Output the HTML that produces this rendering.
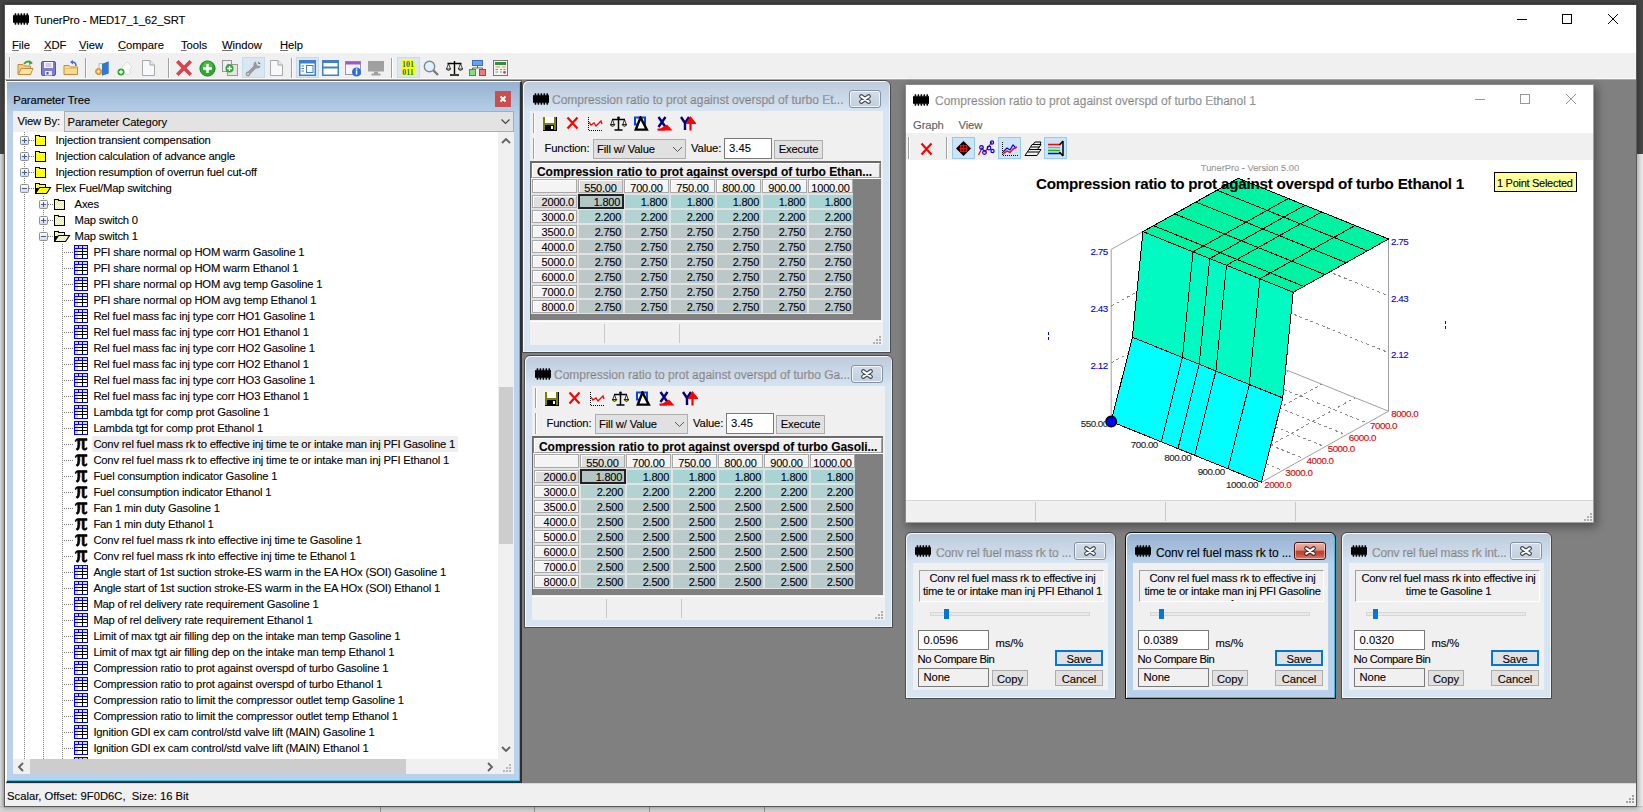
<!DOCTYPE html><html><head><meta charset="utf-8"><style>
html,body{margin:0;padding:0;}body{-webkit-text-stroke:0.2px rgba(0,0,0,0.55);width:1643px;height:812px;position:relative;overflow:hidden;background:#e9e9e9;font-family:"Liberation Sans", sans-serif;color:#000;}
div{box-sizing:border-box;}
</style></head><body>
<div style="position:absolute;left:0px;top:0px;width:1643px;height:154px;background:#474747;"></div>
<div style="position:absolute;left:0px;top:154px;width:4px;height:658px;background:linear-gradient(90deg,#e6e6e6,#cfcfcf);"></div>
<div style="position:absolute;left:0px;top:806px;width:1643px;height:6px;background:linear-gradient(#bdbdbd,#dedede 2px,#d4d4d4);"></div>
<div style="position:absolute;left:380px;top:807px;width:1px;height:5px;background:#9a9a9a;"></div>
<div style="position:absolute;left:534px;top:807px;width:1px;height:5px;background:#9a9a9a;"></div>
<div style="position:absolute;left:649px;top:807px;width:1px;height:5px;background:#9a9a9a;"></div>
<div style="position:absolute;left:764px;top:807px;width:1px;height:5px;background:#9a9a9a;"></div>
<div style="position:absolute;left:4px;top:4px;width:1633px;height:803px;background:#fff;border:1px solid #5a5a5a;border-top:1px solid #444;box-shadow:0 0 5px 1px rgba(0,0,0,0.35);"></div>
<svg style="position:absolute;left:13px;top:13px" width="16" height="12"><rect x="0" y="2.2" width="16" height="7.6" fill="#000"/><rect x="1.60" y="0.3" width="1.7" height="2.4" rx="0.6" fill="#000"/><rect x="1.60" y="9.3" width="1.7" height="2.4" rx="0.6" fill="#000"/><rect x="4.55" y="0.3" width="1.7" height="2.4" rx="0.6" fill="#000"/><rect x="4.55" y="9.3" width="1.7" height="2.4" rx="0.6" fill="#000"/><rect x="7.50" y="0.3" width="1.7" height="2.4" rx="0.6" fill="#000"/><rect x="7.50" y="9.3" width="1.7" height="2.4" rx="0.6" fill="#000"/><rect x="10.45" y="0.3" width="1.7" height="2.4" rx="0.6" fill="#000"/><rect x="10.45" y="9.3" width="1.7" height="2.4" rx="0.6" fill="#000"/><rect x="13.40" y="0.3" width="1.7" height="2.4" rx="0.6" fill="#000"/><rect x="13.40" y="9.3" width="1.7" height="2.4" rx="0.6" fill="#000"/></svg>
<div style="position:absolute;left:34px;top:14.98px;font-size:11.25px;line-height:11.25px;white-space:nowrap;letter-spacing:-0.1px;">TunerPro - MED17_1_62_SRT</div>
<svg style="position:absolute;left:1500px;top:8px" width="130" height="22"><g stroke="#000" stroke-width="1" fill="none" shape-rendering="crispEdges"><line x1="17" y1="11.5" x2="27" y2="11.5"/><rect x="62.5" y="6.5" width="9" height="9"/><line x1="108" y1="6" x2="118" y2="16" shape-rendering="auto"/><line x1="118" y1="6" x2="108" y2="16" shape-rendering="auto"/></g></svg>
<div style="position:absolute;left:12px;top:39.98px;font-size:11.25px;line-height:11.25px;white-space:nowrap;letter-spacing:-0.05px;text-decoration-thickness:1px;text-underline-offset:1px;"><u>F</u>ile</div>
<div style="position:absolute;left:44px;top:39.98px;font-size:11.25px;line-height:11.25px;white-space:nowrap;letter-spacing:-0.05px;text-decoration-thickness:1px;text-underline-offset:1px;"><u>X</u>DF</div>
<div style="position:absolute;left:79px;top:39.98px;font-size:11.25px;line-height:11.25px;white-space:nowrap;letter-spacing:-0.05px;text-decoration-thickness:1px;text-underline-offset:1px;"><u>V</u>iew</div>
<div style="position:absolute;left:118px;top:39.98px;font-size:11.25px;line-height:11.25px;white-space:nowrap;letter-spacing:-0.05px;text-decoration-thickness:1px;text-underline-offset:1px;"><u>C</u>ompare</div>
<div style="position:absolute;left:181px;top:39.98px;font-size:11.25px;line-height:11.25px;white-space:nowrap;letter-spacing:-0.05px;text-decoration-thickness:1px;text-underline-offset:1px;"><u>T</u>ools</div>
<div style="position:absolute;left:222px;top:39.98px;font-size:11.25px;line-height:11.25px;white-space:nowrap;letter-spacing:-0.05px;text-decoration-thickness:1px;text-underline-offset:1px;"><u>W</u>indow</div>
<div style="position:absolute;left:280px;top:39.98px;font-size:11.25px;line-height:11.25px;white-space:nowrap;letter-spacing:-0.05px;text-decoration-thickness:1px;text-underline-offset:1px;"><u>H</u>elp</div>
<div style="position:absolute;left:5px;top:53px;width:1631px;height:27px;background:#f0f0f0;"></div>
<div style="position:absolute;left:5px;top:78px;width:1631px;height:1px;background:#fafafa;"></div>
<div style="position:absolute;left:5px;top:79px;width:1631px;height:1px;background:#a8a8a8;"></div>
<div style="position:absolute;left:6px;top:80px;width:1630px;height:703px;background:#808080;"></div>
<div style="position:absolute;left:6px;top:783px;width:1630px;height:23px;background:#f0f0f0;border-top:1px solid #d7d7d7;"></div>
<div style="position:absolute;left:7px;top:791.48px;font-size:11.25px;line-height:11.25px;white-space:nowrap;">Scalar, Offset: 9F0D6C,&nbsp; Size: 16 Bit</div>
<svg style="position:absolute;left:1626px;top:795px" width="10" height="10"><rect x="6" y="0" width="2" height="2" fill="#a0a0a0"/><rect x="3" y="3" width="2" height="2" fill="#a0a0a0"/><rect x="6" y="3" width="2" height="2" fill="#a0a0a0"/><rect x="0" y="6" width="2" height="2" fill="#a0a0a0"/><rect x="3" y="6" width="2" height="2" fill="#a0a0a0"/><rect x="6" y="6" width="2" height="2" fill="#a0a0a0"/></svg>
<div style="position:absolute;left:6px;top:80px;width:516px;height:1px;background:#5f5f5f;"></div>
<div style="position:absolute;left:6px;top:81px;width:516px;height:702px;background:linear-gradient(#97b1ce 0px,#a9c3df 18px,#b9d1ea 34px,#b9d1ea 100%);border-left:1px solid #fff;border-top:1px solid #fff;border-right:2px solid #2f2f2f;border-bottom:2px solid #2f2f2f;box-shadow:inset -1px -1px 0 #3ac3ec;"></div>
<div style="position:absolute;left:13.3px;top:95.08px;font-size:11.25px;line-height:11.25px;white-space:nowrap;letter-spacing:-0.1px;">Parameter Tree</div>
<div style="position:absolute;left:495px;top:91px;width:16px;height:16px;background:#c94f4f;"><svg width="16" height="16" style="position:absolute;left:0;top:0"><path d="M5.5 5.5 L10.5 10.5 M10.5 5.5 L5.5 10.5" stroke="#fff" stroke-width="2"/></svg></div>
<div style="position:absolute;left:13px;top:111px;width:51px;height:21px;background:#f0f0f0;"></div>
<div style="position:absolute;left:17.5px;top:116.48px;font-size:11.25px;line-height:11.25px;white-space:nowrap;letter-spacing:-0.15px;">View By:</div>
<div style="position:absolute;left:64px;top:111px;width:450px;height:21px;background:#e3e3e3;border:1px solid #acacac;"></div>
<div style="position:absolute;left:67.5px;top:116.98px;font-size:11.25px;line-height:11.25px;white-space:nowrap;letter-spacing:-0.1px;">Parameter Category</div>
<svg style="position:absolute;left:500px;top:118px" width="12" height="8"><path d="M1.5 1.5 L5.5 5.5 L9.5 1.5" stroke="#444" stroke-width="1.2" fill="none"/></svg>
<div style="position:absolute;left:13px;top:132px;width:485px;height:627px;background:#fff;overflow:hidden;"><div style="position:absolute;left:11px;top:0px;width:1px;height:627px;background:repeating-linear-gradient(#7d7d7d 0 1px,transparent 1px 2px);"></div><div style="position:absolute;left:30px;top:64px;width:1px;height:636px;background:repeating-linear-gradient(#7d7d7d 0 1px,transparent 1px 2px);"></div><div style="position:absolute;left:49px;top:112px;width:1px;height:588px;background:repeating-linear-gradient(#7d7d7d 0 1px,transparent 1px 2px);"></div><div style="position:absolute;left:16px;top:8px;width:5px;height:1px;background:repeating-linear-gradient(90deg,#7d7d7d 0 1px,transparent 1px 2px);"></div><svg style="position:absolute;left:7px;top:4px" width="9" height="9"><defs><linearGradient id="pg" x1="0" y1="0" x2="0" y2="1"><stop offset="0" stop-color="#fff"/><stop offset="1" stop-color="#d8d8d8"/></linearGradient></defs><rect x="0.5" y="0.5" width="8" height="8" rx="1" fill="url(#pg)" stroke="#8e8e8e"/><path d="M2 4.5 H7 M4.5 2 V7" stroke="#3c5da6" stroke-width="1"/></svg><svg style="position:absolute;left:22px;top:2px" width="12" height="12" shape-rendering="crispEdges"><defs><pattern id="chk" width="2" height="2" patternUnits="userSpaceOnUse"><rect width="2" height="2" fill="#ffff00"/><rect width="1" height="1" fill="#ffffd8"/><rect x="1" y="1" width="1" height="1" fill="#ffffd8"/></pattern></defs><rect x="0" y="1" width="5" height="3" fill="#000"/><rect x="0" y="2" width="11" height="10" fill="#000"/><rect x="1" y="2" width="3" height="1" fill="#ffff40"/><rect x="1" y="3" width="9" height="8" fill="url(#chk)"/></svg><div style="position:absolute;left:42.6px;top:3.48px;font-size:11.25px;line-height:11.25px;white-space:nowrap;letter-spacing:-0.2px;">Injection transient compensation</div><div style="position:absolute;left:16px;top:24px;width:5px;height:1px;background:repeating-linear-gradient(90deg,#7d7d7d 0 1px,transparent 1px 2px);"></div><svg style="position:absolute;left:7px;top:20px" width="9" height="9"><defs><linearGradient id="pg" x1="0" y1="0" x2="0" y2="1"><stop offset="0" stop-color="#fff"/><stop offset="1" stop-color="#d8d8d8"/></linearGradient></defs><rect x="0.5" y="0.5" width="8" height="8" rx="1" fill="url(#pg)" stroke="#8e8e8e"/><path d="M2 4.5 H7 M4.5 2 V7" stroke="#3c5da6" stroke-width="1"/></svg><svg style="position:absolute;left:22px;top:18px" width="12" height="12" shape-rendering="crispEdges"><defs><pattern id="chk" width="2" height="2" patternUnits="userSpaceOnUse"><rect width="2" height="2" fill="#ffff00"/><rect width="1" height="1" fill="#ffffd8"/><rect x="1" y="1" width="1" height="1" fill="#ffffd8"/></pattern></defs><rect x="0" y="1" width="5" height="3" fill="#000"/><rect x="0" y="2" width="11" height="10" fill="#000"/><rect x="1" y="2" width="3" height="1" fill="#ffff40"/><rect x="1" y="3" width="9" height="8" fill="url(#chk)"/></svg><div style="position:absolute;left:42.6px;top:19.48px;font-size:11.25px;line-height:11.25px;white-space:nowrap;letter-spacing:-0.2px;">Injection calculation of advance angle</div><div style="position:absolute;left:16px;top:40px;width:5px;height:1px;background:repeating-linear-gradient(90deg,#7d7d7d 0 1px,transparent 1px 2px);"></div><svg style="position:absolute;left:7px;top:36px" width="9" height="9"><defs><linearGradient id="pg" x1="0" y1="0" x2="0" y2="1"><stop offset="0" stop-color="#fff"/><stop offset="1" stop-color="#d8d8d8"/></linearGradient></defs><rect x="0.5" y="0.5" width="8" height="8" rx="1" fill="url(#pg)" stroke="#8e8e8e"/><path d="M2 4.5 H7 M4.5 2 V7" stroke="#3c5da6" stroke-width="1"/></svg><svg style="position:absolute;left:22px;top:34px" width="12" height="12" shape-rendering="crispEdges"><defs><pattern id="chk" width="2" height="2" patternUnits="userSpaceOnUse"><rect width="2" height="2" fill="#ffff00"/><rect width="1" height="1" fill="#ffffd8"/><rect x="1" y="1" width="1" height="1" fill="#ffffd8"/></pattern></defs><rect x="0" y="1" width="5" height="3" fill="#000"/><rect x="0" y="2" width="11" height="10" fill="#000"/><rect x="1" y="2" width="3" height="1" fill="#ffff40"/><rect x="1" y="3" width="9" height="8" fill="url(#chk)"/></svg><div style="position:absolute;left:42.6px;top:35.48px;font-size:11.25px;line-height:11.25px;white-space:nowrap;letter-spacing:-0.2px;">Injection resumption of overrun fuel cut-off</div><div style="position:absolute;left:16px;top:56px;width:5px;height:1px;background:repeating-linear-gradient(90deg,#7d7d7d 0 1px,transparent 1px 2px);"></div><svg style="position:absolute;left:7px;top:52px" width="9" height="9"><defs><linearGradient id="pg" x1="0" y1="0" x2="0" y2="1"><stop offset="0" stop-color="#fff"/><stop offset="1" stop-color="#d8d8d8"/></linearGradient></defs><rect x="0.5" y="0.5" width="8" height="8" rx="1" fill="url(#pg)" stroke="#8e8e8e"/><path d="M2 4.5 H7" stroke="#3c5da6" stroke-width="1"/></svg><svg style="position:absolute;left:22px;top:50px" width="17" height="12"><g shape-rendering="crispEdges"><rect x="0" y="1" width="5" height="3" fill="#000"/><rect x="0" y="2" width="11" height="10" fill="#000"/><rect x="1" y="2" width="3" height="1" fill="#ffff40"/><rect x="1" y="3" width="9" height="3" fill="url(#chk)"/></g><path d="M0.5 11.5 L4.5 5.5 H15.5 L11.5 11.5 Z" fill="url(#chk)" stroke="#000" stroke-width="1.1"/></svg><div style="position:absolute;left:42.6px;top:51.48px;font-size:11.25px;line-height:11.25px;white-space:nowrap;letter-spacing:-0.2px;">Flex Fuel/Map switching</div><div style="position:absolute;left:35px;top:72px;width:5px;height:1px;background:repeating-linear-gradient(90deg,#7d7d7d 0 1px,transparent 1px 2px);"></div><svg style="position:absolute;left:26px;top:68px" width="9" height="9"><defs><linearGradient id="pg" x1="0" y1="0" x2="0" y2="1"><stop offset="0" stop-color="#fff"/><stop offset="1" stop-color="#d8d8d8"/></linearGradient></defs><rect x="0.5" y="0.5" width="8" height="8" rx="1" fill="url(#pg)" stroke="#8e8e8e"/><path d="M2 4.5 H7 M4.5 2 V7" stroke="#3c5da6" stroke-width="1"/></svg><svg style="position:absolute;left:41px;top:66px" width="12" height="12" shape-rendering="crispEdges"><defs><pattern id="chk" width="2" height="2" patternUnits="userSpaceOnUse"><rect width="2" height="2" fill="#ffff00"/><rect width="1" height="1" fill="#ffffd8"/><rect x="1" y="1" width="1" height="1" fill="#ffffd8"/></pattern></defs><rect x="0" y="1" width="5" height="3" fill="#000"/><rect x="0" y="2" width="11" height="10" fill="#000"/><rect x="1" y="2" width="3" height="1" fill="#ffff40"/><rect x="1" y="3" width="9" height="8" fill="url(#chk)"/></svg><div style="position:absolute;left:61.599999999999994px;top:67.48px;font-size:11.25px;line-height:11.25px;white-space:nowrap;letter-spacing:-0.2px;">Axes</div><div style="position:absolute;left:35px;top:88px;width:5px;height:1px;background:repeating-linear-gradient(90deg,#7d7d7d 0 1px,transparent 1px 2px);"></div><svg style="position:absolute;left:26px;top:84px" width="9" height="9"><defs><linearGradient id="pg" x1="0" y1="0" x2="0" y2="1"><stop offset="0" stop-color="#fff"/><stop offset="1" stop-color="#d8d8d8"/></linearGradient></defs><rect x="0.5" y="0.5" width="8" height="8" rx="1" fill="url(#pg)" stroke="#8e8e8e"/><path d="M2 4.5 H7 M4.5 2 V7" stroke="#3c5da6" stroke-width="1"/></svg><svg style="position:absolute;left:41px;top:82px" width="12" height="12" shape-rendering="crispEdges"><defs><pattern id="chk" width="2" height="2" patternUnits="userSpaceOnUse"><rect width="2" height="2" fill="#ffff00"/><rect width="1" height="1" fill="#ffffd8"/><rect x="1" y="1" width="1" height="1" fill="#ffffd8"/></pattern></defs><rect x="0" y="1" width="5" height="3" fill="#000"/><rect x="0" y="2" width="11" height="10" fill="#000"/><rect x="1" y="2" width="3" height="1" fill="#ffff40"/><rect x="1" y="3" width="9" height="8" fill="url(#chk)"/></svg><div style="position:absolute;left:61.599999999999994px;top:83.48px;font-size:11.25px;line-height:11.25px;white-space:nowrap;letter-spacing:-0.2px;">Map switch 0</div><div style="position:absolute;left:35px;top:104px;width:5px;height:1px;background:repeating-linear-gradient(90deg,#7d7d7d 0 1px,transparent 1px 2px);"></div><svg style="position:absolute;left:26px;top:100px" width="9" height="9"><defs><linearGradient id="pg" x1="0" y1="0" x2="0" y2="1"><stop offset="0" stop-color="#fff"/><stop offset="1" stop-color="#d8d8d8"/></linearGradient></defs><rect x="0.5" y="0.5" width="8" height="8" rx="1" fill="url(#pg)" stroke="#8e8e8e"/><path d="M2 4.5 H7" stroke="#3c5da6" stroke-width="1"/></svg><svg style="position:absolute;left:41px;top:98px" width="17" height="12"><g shape-rendering="crispEdges"><rect x="0" y="1" width="5" height="3" fill="#000"/><rect x="0" y="2" width="11" height="10" fill="#000"/><rect x="1" y="2" width="3" height="1" fill="#ffff40"/><rect x="1" y="3" width="9" height="3" fill="url(#chk)"/></g><path d="M0.5 11.5 L4.5 5.5 H15.5 L11.5 11.5 Z" fill="url(#chk)" stroke="#000" stroke-width="1.1"/></svg><div style="position:absolute;left:61.599999999999994px;top:99.48px;font-size:11.25px;line-height:11.25px;white-space:nowrap;letter-spacing:-0.2px;">Map switch 1</div><div style="position:absolute;left:51px;top:120px;width:9px;height:1px;background:repeating-linear-gradient(90deg,#7d7d7d 0 1px,transparent 1px 2px);"></div><svg style="position:absolute;left:61px;top:113px" width="14" height="14" shape-rendering="crispEdges"><rect x="0" y="0" width="14" height="14" fill="#0000ff"/><rect x="4" y="4" width="9" height="9" fill="#fff"/><rect x="1" y="1" width="3" height="2" fill="#dcd8a8"/><rect x="5" y="1" width="3" height="2" fill="#dcd8a8"/><rect x="9" y="1" width="4" height="2" fill="#dcd8a8"/><rect x="1" y="4" width="3" height="2" fill="#dcd8a8"/><rect x="1" y="7" width="3" height="2" fill="#dcd8a8"/><rect x="1" y="10" width="3" height="3" fill="#dcd8a8"/><rect x="8" y="4" width="1" height="9" fill="#000"/><rect x="4" y="6" width="9" height="1" fill="#000"/><rect x="4" y="9" width="9" height="1" fill="#000"/></svg><div style="position:absolute;left:80.4px;top:115.48px;font-size:11.25px;line-height:11.25px;white-space:nowrap;letter-spacing:-0.2px;">PFI share normal op HOM warm Gasoline 1</div><div style="position:absolute;left:51px;top:136px;width:9px;height:1px;background:repeating-linear-gradient(90deg,#7d7d7d 0 1px,transparent 1px 2px);"></div><svg style="position:absolute;left:61px;top:129px" width="14" height="14" shape-rendering="crispEdges"><rect x="0" y="0" width="14" height="14" fill="#0000ff"/><rect x="4" y="4" width="9" height="9" fill="#fff"/><rect x="1" y="1" width="3" height="2" fill="#dcd8a8"/><rect x="5" y="1" width="3" height="2" fill="#dcd8a8"/><rect x="9" y="1" width="4" height="2" fill="#dcd8a8"/><rect x="1" y="4" width="3" height="2" fill="#dcd8a8"/><rect x="1" y="7" width="3" height="2" fill="#dcd8a8"/><rect x="1" y="10" width="3" height="3" fill="#dcd8a8"/><rect x="8" y="4" width="1" height="9" fill="#000"/><rect x="4" y="6" width="9" height="1" fill="#000"/><rect x="4" y="9" width="9" height="1" fill="#000"/></svg><div style="position:absolute;left:80.4px;top:131.48px;font-size:11.25px;line-height:11.25px;white-space:nowrap;letter-spacing:-0.2px;">PFI share normal op HOM warm Ethanol 1</div><div style="position:absolute;left:51px;top:152px;width:9px;height:1px;background:repeating-linear-gradient(90deg,#7d7d7d 0 1px,transparent 1px 2px);"></div><svg style="position:absolute;left:61px;top:145px" width="14" height="14" shape-rendering="crispEdges"><rect x="0" y="0" width="14" height="14" fill="#0000ff"/><rect x="4" y="4" width="9" height="9" fill="#fff"/><rect x="1" y="1" width="3" height="2" fill="#dcd8a8"/><rect x="5" y="1" width="3" height="2" fill="#dcd8a8"/><rect x="9" y="1" width="4" height="2" fill="#dcd8a8"/><rect x="1" y="4" width="3" height="2" fill="#dcd8a8"/><rect x="1" y="7" width="3" height="2" fill="#dcd8a8"/><rect x="1" y="10" width="3" height="3" fill="#dcd8a8"/><rect x="8" y="4" width="1" height="9" fill="#000"/><rect x="4" y="6" width="9" height="1" fill="#000"/><rect x="4" y="9" width="9" height="1" fill="#000"/></svg><div style="position:absolute;left:80.4px;top:147.48px;font-size:11.25px;line-height:11.25px;white-space:nowrap;letter-spacing:-0.2px;">PFI share normal op HOM avg temp Gasoline 1</div><div style="position:absolute;left:51px;top:168px;width:9px;height:1px;background:repeating-linear-gradient(90deg,#7d7d7d 0 1px,transparent 1px 2px);"></div><svg style="position:absolute;left:61px;top:161px" width="14" height="14" shape-rendering="crispEdges"><rect x="0" y="0" width="14" height="14" fill="#0000ff"/><rect x="4" y="4" width="9" height="9" fill="#fff"/><rect x="1" y="1" width="3" height="2" fill="#dcd8a8"/><rect x="5" y="1" width="3" height="2" fill="#dcd8a8"/><rect x="9" y="1" width="4" height="2" fill="#dcd8a8"/><rect x="1" y="4" width="3" height="2" fill="#dcd8a8"/><rect x="1" y="7" width="3" height="2" fill="#dcd8a8"/><rect x="1" y="10" width="3" height="3" fill="#dcd8a8"/><rect x="8" y="4" width="1" height="9" fill="#000"/><rect x="4" y="6" width="9" height="1" fill="#000"/><rect x="4" y="9" width="9" height="1" fill="#000"/></svg><div style="position:absolute;left:80.4px;top:163.48px;font-size:11.25px;line-height:11.25px;white-space:nowrap;letter-spacing:-0.2px;">PFI share normal op HOM avg temp Ethanol 1</div><div style="position:absolute;left:51px;top:184px;width:9px;height:1px;background:repeating-linear-gradient(90deg,#7d7d7d 0 1px,transparent 1px 2px);"></div><svg style="position:absolute;left:61px;top:177px" width="14" height="14" shape-rendering="crispEdges"><rect x="0" y="0" width="14" height="14" fill="#0000ff"/><rect x="4" y="4" width="9" height="9" fill="#fff"/><rect x="1" y="1" width="3" height="2" fill="#dcd8a8"/><rect x="5" y="1" width="3" height="2" fill="#dcd8a8"/><rect x="9" y="1" width="4" height="2" fill="#dcd8a8"/><rect x="1" y="4" width="3" height="2" fill="#dcd8a8"/><rect x="1" y="7" width="3" height="2" fill="#dcd8a8"/><rect x="1" y="10" width="3" height="3" fill="#dcd8a8"/><rect x="8" y="4" width="1" height="9" fill="#000"/><rect x="4" y="6" width="9" height="1" fill="#000"/><rect x="4" y="9" width="9" height="1" fill="#000"/></svg><div style="position:absolute;left:80.4px;top:179.48px;font-size:11.25px;line-height:11.25px;white-space:nowrap;letter-spacing:-0.2px;">Rel fuel mass fac inj type corr HO1 Gasoline 1</div><div style="position:absolute;left:51px;top:200px;width:9px;height:1px;background:repeating-linear-gradient(90deg,#7d7d7d 0 1px,transparent 1px 2px);"></div><svg style="position:absolute;left:61px;top:193px" width="14" height="14" shape-rendering="crispEdges"><rect x="0" y="0" width="14" height="14" fill="#0000ff"/><rect x="4" y="4" width="9" height="9" fill="#fff"/><rect x="1" y="1" width="3" height="2" fill="#dcd8a8"/><rect x="5" y="1" width="3" height="2" fill="#dcd8a8"/><rect x="9" y="1" width="4" height="2" fill="#dcd8a8"/><rect x="1" y="4" width="3" height="2" fill="#dcd8a8"/><rect x="1" y="7" width="3" height="2" fill="#dcd8a8"/><rect x="1" y="10" width="3" height="3" fill="#dcd8a8"/><rect x="8" y="4" width="1" height="9" fill="#000"/><rect x="4" y="6" width="9" height="1" fill="#000"/><rect x="4" y="9" width="9" height="1" fill="#000"/></svg><div style="position:absolute;left:80.4px;top:195.48px;font-size:11.25px;line-height:11.25px;white-space:nowrap;letter-spacing:-0.2px;">Rel fuel mass fac inj type corr HO1 Ethanol 1</div><div style="position:absolute;left:51px;top:216px;width:9px;height:1px;background:repeating-linear-gradient(90deg,#7d7d7d 0 1px,transparent 1px 2px);"></div><svg style="position:absolute;left:61px;top:209px" width="14" height="14" shape-rendering="crispEdges"><rect x="0" y="0" width="14" height="14" fill="#0000ff"/><rect x="4" y="4" width="9" height="9" fill="#fff"/><rect x="1" y="1" width="3" height="2" fill="#dcd8a8"/><rect x="5" y="1" width="3" height="2" fill="#dcd8a8"/><rect x="9" y="1" width="4" height="2" fill="#dcd8a8"/><rect x="1" y="4" width="3" height="2" fill="#dcd8a8"/><rect x="1" y="7" width="3" height="2" fill="#dcd8a8"/><rect x="1" y="10" width="3" height="3" fill="#dcd8a8"/><rect x="8" y="4" width="1" height="9" fill="#000"/><rect x="4" y="6" width="9" height="1" fill="#000"/><rect x="4" y="9" width="9" height="1" fill="#000"/></svg><div style="position:absolute;left:80.4px;top:211.48px;font-size:11.25px;line-height:11.25px;white-space:nowrap;letter-spacing:-0.2px;">Rel fuel mass fac inj type corr HO2 Gasoline 1</div><div style="position:absolute;left:51px;top:232px;width:9px;height:1px;background:repeating-linear-gradient(90deg,#7d7d7d 0 1px,transparent 1px 2px);"></div><svg style="position:absolute;left:61px;top:225px" width="14" height="14" shape-rendering="crispEdges"><rect x="0" y="0" width="14" height="14" fill="#0000ff"/><rect x="4" y="4" width="9" height="9" fill="#fff"/><rect x="1" y="1" width="3" height="2" fill="#dcd8a8"/><rect x="5" y="1" width="3" height="2" fill="#dcd8a8"/><rect x="9" y="1" width="4" height="2" fill="#dcd8a8"/><rect x="1" y="4" width="3" height="2" fill="#dcd8a8"/><rect x="1" y="7" width="3" height="2" fill="#dcd8a8"/><rect x="1" y="10" width="3" height="3" fill="#dcd8a8"/><rect x="8" y="4" width="1" height="9" fill="#000"/><rect x="4" y="6" width="9" height="1" fill="#000"/><rect x="4" y="9" width="9" height="1" fill="#000"/></svg><div style="position:absolute;left:80.4px;top:227.48px;font-size:11.25px;line-height:11.25px;white-space:nowrap;letter-spacing:-0.2px;">Rel fuel mass fac inj type corr HO2 Ethanol 1</div><div style="position:absolute;left:51px;top:248px;width:9px;height:1px;background:repeating-linear-gradient(90deg,#7d7d7d 0 1px,transparent 1px 2px);"></div><svg style="position:absolute;left:61px;top:241px" width="14" height="14" shape-rendering="crispEdges"><rect x="0" y="0" width="14" height="14" fill="#0000ff"/><rect x="4" y="4" width="9" height="9" fill="#fff"/><rect x="1" y="1" width="3" height="2" fill="#dcd8a8"/><rect x="5" y="1" width="3" height="2" fill="#dcd8a8"/><rect x="9" y="1" width="4" height="2" fill="#dcd8a8"/><rect x="1" y="4" width="3" height="2" fill="#dcd8a8"/><rect x="1" y="7" width="3" height="2" fill="#dcd8a8"/><rect x="1" y="10" width="3" height="3" fill="#dcd8a8"/><rect x="8" y="4" width="1" height="9" fill="#000"/><rect x="4" y="6" width="9" height="1" fill="#000"/><rect x="4" y="9" width="9" height="1" fill="#000"/></svg><div style="position:absolute;left:80.4px;top:243.48px;font-size:11.25px;line-height:11.25px;white-space:nowrap;letter-spacing:-0.2px;">Rel fuel mass fac inj type corr HO3 Gasoline 1</div><div style="position:absolute;left:51px;top:264px;width:9px;height:1px;background:repeating-linear-gradient(90deg,#7d7d7d 0 1px,transparent 1px 2px);"></div><svg style="position:absolute;left:61px;top:257px" width="14" height="14" shape-rendering="crispEdges"><rect x="0" y="0" width="14" height="14" fill="#0000ff"/><rect x="4" y="4" width="9" height="9" fill="#fff"/><rect x="1" y="1" width="3" height="2" fill="#dcd8a8"/><rect x="5" y="1" width="3" height="2" fill="#dcd8a8"/><rect x="9" y="1" width="4" height="2" fill="#dcd8a8"/><rect x="1" y="4" width="3" height="2" fill="#dcd8a8"/><rect x="1" y="7" width="3" height="2" fill="#dcd8a8"/><rect x="1" y="10" width="3" height="3" fill="#dcd8a8"/><rect x="8" y="4" width="1" height="9" fill="#000"/><rect x="4" y="6" width="9" height="1" fill="#000"/><rect x="4" y="9" width="9" height="1" fill="#000"/></svg><div style="position:absolute;left:80.4px;top:259.48px;font-size:11.25px;line-height:11.25px;white-space:nowrap;letter-spacing:-0.2px;">Rel fuel mass fac inj type corr HO3 Ethanol 1</div><div style="position:absolute;left:51px;top:280px;width:9px;height:1px;background:repeating-linear-gradient(90deg,#7d7d7d 0 1px,transparent 1px 2px);"></div><svg style="position:absolute;left:61px;top:273px" width="14" height="14" shape-rendering="crispEdges"><rect x="0" y="0" width="14" height="14" fill="#0000ff"/><rect x="4" y="4" width="9" height="9" fill="#fff"/><rect x="1" y="1" width="3" height="2" fill="#dcd8a8"/><rect x="5" y="1" width="3" height="2" fill="#dcd8a8"/><rect x="9" y="1" width="4" height="2" fill="#dcd8a8"/><rect x="1" y="4" width="3" height="2" fill="#dcd8a8"/><rect x="1" y="7" width="3" height="2" fill="#dcd8a8"/><rect x="1" y="10" width="3" height="3" fill="#dcd8a8"/><rect x="8" y="4" width="1" height="9" fill="#000"/><rect x="4" y="6" width="9" height="1" fill="#000"/><rect x="4" y="9" width="9" height="1" fill="#000"/></svg><div style="position:absolute;left:80.4px;top:275.48px;font-size:11.25px;line-height:11.25px;white-space:nowrap;letter-spacing:-0.2px;">Lambda tgt for comp prot Gasoline 1</div><div style="position:absolute;left:51px;top:296px;width:9px;height:1px;background:repeating-linear-gradient(90deg,#7d7d7d 0 1px,transparent 1px 2px);"></div><svg style="position:absolute;left:61px;top:289px" width="14" height="14" shape-rendering="crispEdges"><rect x="0" y="0" width="14" height="14" fill="#0000ff"/><rect x="4" y="4" width="9" height="9" fill="#fff"/><rect x="1" y="1" width="3" height="2" fill="#dcd8a8"/><rect x="5" y="1" width="3" height="2" fill="#dcd8a8"/><rect x="9" y="1" width="4" height="2" fill="#dcd8a8"/><rect x="1" y="4" width="3" height="2" fill="#dcd8a8"/><rect x="1" y="7" width="3" height="2" fill="#dcd8a8"/><rect x="1" y="10" width="3" height="3" fill="#dcd8a8"/><rect x="8" y="4" width="1" height="9" fill="#000"/><rect x="4" y="6" width="9" height="1" fill="#000"/><rect x="4" y="9" width="9" height="1" fill="#000"/></svg><div style="position:absolute;left:80.4px;top:291.48px;font-size:11.25px;line-height:11.25px;white-space:nowrap;letter-spacing:-0.2px;">Lambda tgt for comp prot Ethanol 1</div><div style="position:absolute;left:51px;top:312px;width:9px;height:1px;background:repeating-linear-gradient(90deg,#7d7d7d 0 1px,transparent 1px 2px);"></div><svg style="position:absolute;left:61px;top:305px" width="14" height="14"><path stroke="#000" stroke-width="0.7" d="M1 4.2 Q1.5 1.6 4 1.6 H13 V3.6 H10.2 V10.5 Q10.2 11.6 11.2 11.6 Q12 11.6 12.3 10.6 L13.2 10.9 Q12.8 13.2 10.8 13.2 Q8.2 13.2 8.2 10.8 V3.6 H5.8 V7.5 Q5.6 11 4.6 12.6 Q4.2 13.2 3.4 13.2 Q2.2 13.2 2.4 12 Q2.6 11.2 3.3 10.6 Q3.8 9.6 3.8 7.5 V3.6 H3.2 Q2 3.6 1.7 4.6 Z" fill="#000"/></svg><div style="position:absolute;left:79px;top:304px;width:366px;height:16px;background:#eeeeee;"></div><div style="position:absolute;left:80.4px;top:307.48px;font-size:11.25px;line-height:11.25px;white-space:nowrap;letter-spacing:-0.2px;">Conv rel fuel mass rk to effective inj time te or intake man inj PFI Gasoline 1</div><div style="position:absolute;left:51px;top:328px;width:9px;height:1px;background:repeating-linear-gradient(90deg,#7d7d7d 0 1px,transparent 1px 2px);"></div><svg style="position:absolute;left:61px;top:321px" width="14" height="14"><path stroke="#000" stroke-width="0.7" d="M1 4.2 Q1.5 1.6 4 1.6 H13 V3.6 H10.2 V10.5 Q10.2 11.6 11.2 11.6 Q12 11.6 12.3 10.6 L13.2 10.9 Q12.8 13.2 10.8 13.2 Q8.2 13.2 8.2 10.8 V3.6 H5.8 V7.5 Q5.6 11 4.6 12.6 Q4.2 13.2 3.4 13.2 Q2.2 13.2 2.4 12 Q2.6 11.2 3.3 10.6 Q3.8 9.6 3.8 7.5 V3.6 H3.2 Q2 3.6 1.7 4.6 Z" fill="#000"/></svg><div style="position:absolute;left:80.4px;top:323.48px;font-size:11.25px;line-height:11.25px;white-space:nowrap;letter-spacing:-0.2px;">Conv rel fuel mass rk to effective inj time te or intake man inj PFI Ethanol 1</div><div style="position:absolute;left:51px;top:344px;width:9px;height:1px;background:repeating-linear-gradient(90deg,#7d7d7d 0 1px,transparent 1px 2px);"></div><svg style="position:absolute;left:61px;top:337px" width="14" height="14"><path stroke="#000" stroke-width="0.7" d="M1 4.2 Q1.5 1.6 4 1.6 H13 V3.6 H10.2 V10.5 Q10.2 11.6 11.2 11.6 Q12 11.6 12.3 10.6 L13.2 10.9 Q12.8 13.2 10.8 13.2 Q8.2 13.2 8.2 10.8 V3.6 H5.8 V7.5 Q5.6 11 4.6 12.6 Q4.2 13.2 3.4 13.2 Q2.2 13.2 2.4 12 Q2.6 11.2 3.3 10.6 Q3.8 9.6 3.8 7.5 V3.6 H3.2 Q2 3.6 1.7 4.6 Z" fill="#000"/></svg><div style="position:absolute;left:80.4px;top:339.48px;font-size:11.25px;line-height:11.25px;white-space:nowrap;letter-spacing:-0.2px;">Fuel consumption indicator Gasoline 1</div><div style="position:absolute;left:51px;top:360px;width:9px;height:1px;background:repeating-linear-gradient(90deg,#7d7d7d 0 1px,transparent 1px 2px);"></div><svg style="position:absolute;left:61px;top:353px" width="14" height="14"><path stroke="#000" stroke-width="0.7" d="M1 4.2 Q1.5 1.6 4 1.6 H13 V3.6 H10.2 V10.5 Q10.2 11.6 11.2 11.6 Q12 11.6 12.3 10.6 L13.2 10.9 Q12.8 13.2 10.8 13.2 Q8.2 13.2 8.2 10.8 V3.6 H5.8 V7.5 Q5.6 11 4.6 12.6 Q4.2 13.2 3.4 13.2 Q2.2 13.2 2.4 12 Q2.6 11.2 3.3 10.6 Q3.8 9.6 3.8 7.5 V3.6 H3.2 Q2 3.6 1.7 4.6 Z" fill="#000"/></svg><div style="position:absolute;left:80.4px;top:355.48px;font-size:11.25px;line-height:11.25px;white-space:nowrap;letter-spacing:-0.2px;">Fuel consumption indicator Ethanol 1</div><div style="position:absolute;left:51px;top:376px;width:9px;height:1px;background:repeating-linear-gradient(90deg,#7d7d7d 0 1px,transparent 1px 2px);"></div><svg style="position:absolute;left:61px;top:369px" width="14" height="14"><path stroke="#000" stroke-width="0.7" d="M1 4.2 Q1.5 1.6 4 1.6 H13 V3.6 H10.2 V10.5 Q10.2 11.6 11.2 11.6 Q12 11.6 12.3 10.6 L13.2 10.9 Q12.8 13.2 10.8 13.2 Q8.2 13.2 8.2 10.8 V3.6 H5.8 V7.5 Q5.6 11 4.6 12.6 Q4.2 13.2 3.4 13.2 Q2.2 13.2 2.4 12 Q2.6 11.2 3.3 10.6 Q3.8 9.6 3.8 7.5 V3.6 H3.2 Q2 3.6 1.7 4.6 Z" fill="#000"/></svg><div style="position:absolute;left:80.4px;top:371.48px;font-size:11.25px;line-height:11.25px;white-space:nowrap;letter-spacing:-0.2px;">Fan 1 min duty Gasoline 1</div><div style="position:absolute;left:51px;top:392px;width:9px;height:1px;background:repeating-linear-gradient(90deg,#7d7d7d 0 1px,transparent 1px 2px);"></div><svg style="position:absolute;left:61px;top:385px" width="14" height="14"><path stroke="#000" stroke-width="0.7" d="M1 4.2 Q1.5 1.6 4 1.6 H13 V3.6 H10.2 V10.5 Q10.2 11.6 11.2 11.6 Q12 11.6 12.3 10.6 L13.2 10.9 Q12.8 13.2 10.8 13.2 Q8.2 13.2 8.2 10.8 V3.6 H5.8 V7.5 Q5.6 11 4.6 12.6 Q4.2 13.2 3.4 13.2 Q2.2 13.2 2.4 12 Q2.6 11.2 3.3 10.6 Q3.8 9.6 3.8 7.5 V3.6 H3.2 Q2 3.6 1.7 4.6 Z" fill="#000"/></svg><div style="position:absolute;left:80.4px;top:387.48px;font-size:11.25px;line-height:11.25px;white-space:nowrap;letter-spacing:-0.2px;">Fan 1 min duty Ethanol 1</div><div style="position:absolute;left:51px;top:408px;width:9px;height:1px;background:repeating-linear-gradient(90deg,#7d7d7d 0 1px,transparent 1px 2px);"></div><svg style="position:absolute;left:61px;top:401px" width="14" height="14"><path stroke="#000" stroke-width="0.7" d="M1 4.2 Q1.5 1.6 4 1.6 H13 V3.6 H10.2 V10.5 Q10.2 11.6 11.2 11.6 Q12 11.6 12.3 10.6 L13.2 10.9 Q12.8 13.2 10.8 13.2 Q8.2 13.2 8.2 10.8 V3.6 H5.8 V7.5 Q5.6 11 4.6 12.6 Q4.2 13.2 3.4 13.2 Q2.2 13.2 2.4 12 Q2.6 11.2 3.3 10.6 Q3.8 9.6 3.8 7.5 V3.6 H3.2 Q2 3.6 1.7 4.6 Z" fill="#000"/></svg><div style="position:absolute;left:80.4px;top:403.48px;font-size:11.25px;line-height:11.25px;white-space:nowrap;letter-spacing:-0.2px;">Conv rel fuel mass rk into effective inj time te Gasoline 1</div><div style="position:absolute;left:51px;top:424px;width:9px;height:1px;background:repeating-linear-gradient(90deg,#7d7d7d 0 1px,transparent 1px 2px);"></div><svg style="position:absolute;left:61px;top:417px" width="14" height="14"><path stroke="#000" stroke-width="0.7" d="M1 4.2 Q1.5 1.6 4 1.6 H13 V3.6 H10.2 V10.5 Q10.2 11.6 11.2 11.6 Q12 11.6 12.3 10.6 L13.2 10.9 Q12.8 13.2 10.8 13.2 Q8.2 13.2 8.2 10.8 V3.6 H5.8 V7.5 Q5.6 11 4.6 12.6 Q4.2 13.2 3.4 13.2 Q2.2 13.2 2.4 12 Q2.6 11.2 3.3 10.6 Q3.8 9.6 3.8 7.5 V3.6 H3.2 Q2 3.6 1.7 4.6 Z" fill="#000"/></svg><div style="position:absolute;left:80.4px;top:419.48px;font-size:11.25px;line-height:11.25px;white-space:nowrap;letter-spacing:-0.2px;">Conv rel fuel mass rk into effective inj time te Ethanol 1</div><div style="position:absolute;left:51px;top:440px;width:9px;height:1px;background:repeating-linear-gradient(90deg,#7d7d7d 0 1px,transparent 1px 2px);"></div><svg style="position:absolute;left:61px;top:433px" width="14" height="14" shape-rendering="crispEdges"><rect x="0" y="0" width="14" height="14" fill="#0000ff"/><rect x="4" y="4" width="9" height="9" fill="#fff"/><rect x="1" y="1" width="3" height="2" fill="#dcd8a8"/><rect x="5" y="1" width="3" height="2" fill="#dcd8a8"/><rect x="9" y="1" width="4" height="2" fill="#dcd8a8"/><rect x="1" y="4" width="3" height="2" fill="#dcd8a8"/><rect x="1" y="7" width="3" height="2" fill="#dcd8a8"/><rect x="1" y="10" width="3" height="3" fill="#dcd8a8"/><rect x="8" y="4" width="1" height="9" fill="#000"/><rect x="4" y="6" width="9" height="1" fill="#000"/><rect x="4" y="9" width="9" height="1" fill="#000"/></svg><div style="position:absolute;left:80.4px;top:435.48px;font-size:11.25px;line-height:11.25px;white-space:nowrap;letter-spacing:-0.2px;">Angle start of 1st suction stroke-ES warm in the EA HOx (SOI) Gasoline 1</div><div style="position:absolute;left:51px;top:456px;width:9px;height:1px;background:repeating-linear-gradient(90deg,#7d7d7d 0 1px,transparent 1px 2px);"></div><svg style="position:absolute;left:61px;top:449px" width="14" height="14" shape-rendering="crispEdges"><rect x="0" y="0" width="14" height="14" fill="#0000ff"/><rect x="4" y="4" width="9" height="9" fill="#fff"/><rect x="1" y="1" width="3" height="2" fill="#dcd8a8"/><rect x="5" y="1" width="3" height="2" fill="#dcd8a8"/><rect x="9" y="1" width="4" height="2" fill="#dcd8a8"/><rect x="1" y="4" width="3" height="2" fill="#dcd8a8"/><rect x="1" y="7" width="3" height="2" fill="#dcd8a8"/><rect x="1" y="10" width="3" height="3" fill="#dcd8a8"/><rect x="8" y="4" width="1" height="9" fill="#000"/><rect x="4" y="6" width="9" height="1" fill="#000"/><rect x="4" y="9" width="9" height="1" fill="#000"/></svg><div style="position:absolute;left:80.4px;top:451.48px;font-size:11.25px;line-height:11.25px;white-space:nowrap;letter-spacing:-0.2px;">Angle start of 1st suction stroke-ES warm in the EA HOx (SOI) Ethanol 1</div><div style="position:absolute;left:51px;top:472px;width:9px;height:1px;background:repeating-linear-gradient(90deg,#7d7d7d 0 1px,transparent 1px 2px);"></div><svg style="position:absolute;left:61px;top:465px" width="14" height="14" shape-rendering="crispEdges"><rect x="0" y="0" width="14" height="14" fill="#0000ff"/><rect x="4" y="4" width="9" height="9" fill="#fff"/><rect x="1" y="1" width="3" height="2" fill="#dcd8a8"/><rect x="5" y="1" width="3" height="2" fill="#dcd8a8"/><rect x="9" y="1" width="4" height="2" fill="#dcd8a8"/><rect x="1" y="4" width="3" height="2" fill="#dcd8a8"/><rect x="1" y="7" width="3" height="2" fill="#dcd8a8"/><rect x="1" y="10" width="3" height="3" fill="#dcd8a8"/><rect x="8" y="4" width="1" height="9" fill="#000"/><rect x="4" y="6" width="9" height="1" fill="#000"/><rect x="4" y="9" width="9" height="1" fill="#000"/></svg><div style="position:absolute;left:80.4px;top:467.48px;font-size:11.25px;line-height:11.25px;white-space:nowrap;letter-spacing:-0.2px;">Map of rel delivery rate requirement Gasoline 1</div><div style="position:absolute;left:51px;top:488px;width:9px;height:1px;background:repeating-linear-gradient(90deg,#7d7d7d 0 1px,transparent 1px 2px);"></div><svg style="position:absolute;left:61px;top:481px" width="14" height="14" shape-rendering="crispEdges"><rect x="0" y="0" width="14" height="14" fill="#0000ff"/><rect x="4" y="4" width="9" height="9" fill="#fff"/><rect x="1" y="1" width="3" height="2" fill="#dcd8a8"/><rect x="5" y="1" width="3" height="2" fill="#dcd8a8"/><rect x="9" y="1" width="4" height="2" fill="#dcd8a8"/><rect x="1" y="4" width="3" height="2" fill="#dcd8a8"/><rect x="1" y="7" width="3" height="2" fill="#dcd8a8"/><rect x="1" y="10" width="3" height="3" fill="#dcd8a8"/><rect x="8" y="4" width="1" height="9" fill="#000"/><rect x="4" y="6" width="9" height="1" fill="#000"/><rect x="4" y="9" width="9" height="1" fill="#000"/></svg><div style="position:absolute;left:80.4px;top:483.48px;font-size:11.25px;line-height:11.25px;white-space:nowrap;letter-spacing:-0.2px;">Map of rel delivery rate requirement Ethanol 1</div><div style="position:absolute;left:51px;top:504px;width:9px;height:1px;background:repeating-linear-gradient(90deg,#7d7d7d 0 1px,transparent 1px 2px);"></div><svg style="position:absolute;left:61px;top:497px" width="14" height="14" shape-rendering="crispEdges"><rect x="0" y="0" width="14" height="14" fill="#0000ff"/><rect x="4" y="4" width="9" height="9" fill="#fff"/><rect x="1" y="1" width="3" height="2" fill="#dcd8a8"/><rect x="5" y="1" width="3" height="2" fill="#dcd8a8"/><rect x="9" y="1" width="4" height="2" fill="#dcd8a8"/><rect x="1" y="4" width="3" height="2" fill="#dcd8a8"/><rect x="1" y="7" width="3" height="2" fill="#dcd8a8"/><rect x="1" y="10" width="3" height="3" fill="#dcd8a8"/><rect x="8" y="4" width="1" height="9" fill="#000"/><rect x="4" y="6" width="9" height="1" fill="#000"/><rect x="4" y="9" width="9" height="1" fill="#000"/></svg><div style="position:absolute;left:80.4px;top:499.48px;font-size:11.25px;line-height:11.25px;white-space:nowrap;letter-spacing:-0.2px;">Limit of max tgt air filling dep on the intake man temp Gasoline 1</div><div style="position:absolute;left:51px;top:520px;width:9px;height:1px;background:repeating-linear-gradient(90deg,#7d7d7d 0 1px,transparent 1px 2px);"></div><svg style="position:absolute;left:61px;top:513px" width="14" height="14" shape-rendering="crispEdges"><rect x="0" y="0" width="14" height="14" fill="#0000ff"/><rect x="4" y="4" width="9" height="9" fill="#fff"/><rect x="1" y="1" width="3" height="2" fill="#dcd8a8"/><rect x="5" y="1" width="3" height="2" fill="#dcd8a8"/><rect x="9" y="1" width="4" height="2" fill="#dcd8a8"/><rect x="1" y="4" width="3" height="2" fill="#dcd8a8"/><rect x="1" y="7" width="3" height="2" fill="#dcd8a8"/><rect x="1" y="10" width="3" height="3" fill="#dcd8a8"/><rect x="8" y="4" width="1" height="9" fill="#000"/><rect x="4" y="6" width="9" height="1" fill="#000"/><rect x="4" y="9" width="9" height="1" fill="#000"/></svg><div style="position:absolute;left:80.4px;top:515.48px;font-size:11.25px;line-height:11.25px;white-space:nowrap;letter-spacing:-0.2px;">Limit of max tgt air filling dep on the intake man temp Ethanol 1</div><div style="position:absolute;left:51px;top:536px;width:9px;height:1px;background:repeating-linear-gradient(90deg,#7d7d7d 0 1px,transparent 1px 2px);"></div><svg style="position:absolute;left:61px;top:529px" width="14" height="14" shape-rendering="crispEdges"><rect x="0" y="0" width="14" height="14" fill="#0000ff"/><rect x="4" y="4" width="9" height="9" fill="#fff"/><rect x="1" y="1" width="3" height="2" fill="#dcd8a8"/><rect x="5" y="1" width="3" height="2" fill="#dcd8a8"/><rect x="9" y="1" width="4" height="2" fill="#dcd8a8"/><rect x="1" y="4" width="3" height="2" fill="#dcd8a8"/><rect x="1" y="7" width="3" height="2" fill="#dcd8a8"/><rect x="1" y="10" width="3" height="3" fill="#dcd8a8"/><rect x="8" y="4" width="1" height="9" fill="#000"/><rect x="4" y="6" width="9" height="1" fill="#000"/><rect x="4" y="9" width="9" height="1" fill="#000"/></svg><div style="position:absolute;left:80.4px;top:531.48px;font-size:11.25px;line-height:11.25px;white-space:nowrap;letter-spacing:-0.2px;">Compression ratio to prot against overspd of turbo Gasoline 1</div><div style="position:absolute;left:51px;top:552px;width:9px;height:1px;background:repeating-linear-gradient(90deg,#7d7d7d 0 1px,transparent 1px 2px);"></div><svg style="position:absolute;left:61px;top:545px" width="14" height="14" shape-rendering="crispEdges"><rect x="0" y="0" width="14" height="14" fill="#0000ff"/><rect x="4" y="4" width="9" height="9" fill="#fff"/><rect x="1" y="1" width="3" height="2" fill="#dcd8a8"/><rect x="5" y="1" width="3" height="2" fill="#dcd8a8"/><rect x="9" y="1" width="4" height="2" fill="#dcd8a8"/><rect x="1" y="4" width="3" height="2" fill="#dcd8a8"/><rect x="1" y="7" width="3" height="2" fill="#dcd8a8"/><rect x="1" y="10" width="3" height="3" fill="#dcd8a8"/><rect x="8" y="4" width="1" height="9" fill="#000"/><rect x="4" y="6" width="9" height="1" fill="#000"/><rect x="4" y="9" width="9" height="1" fill="#000"/></svg><div style="position:absolute;left:80.4px;top:547.48px;font-size:11.25px;line-height:11.25px;white-space:nowrap;letter-spacing:-0.2px;">Compression ratio to prot against overspd of turbo Ethanol 1</div><div style="position:absolute;left:51px;top:568px;width:9px;height:1px;background:repeating-linear-gradient(90deg,#7d7d7d 0 1px,transparent 1px 2px);"></div><svg style="position:absolute;left:61px;top:561px" width="14" height="14" shape-rendering="crispEdges"><rect x="0" y="0" width="14" height="14" fill="#0000ff"/><rect x="4" y="4" width="9" height="9" fill="#fff"/><rect x="1" y="1" width="3" height="2" fill="#dcd8a8"/><rect x="5" y="1" width="3" height="2" fill="#dcd8a8"/><rect x="9" y="1" width="4" height="2" fill="#dcd8a8"/><rect x="1" y="4" width="3" height="2" fill="#dcd8a8"/><rect x="1" y="7" width="3" height="2" fill="#dcd8a8"/><rect x="1" y="10" width="3" height="3" fill="#dcd8a8"/><rect x="8" y="4" width="1" height="9" fill="#000"/><rect x="4" y="6" width="9" height="1" fill="#000"/><rect x="4" y="9" width="9" height="1" fill="#000"/></svg><div style="position:absolute;left:80.4px;top:563.48px;font-size:11.25px;line-height:11.25px;white-space:nowrap;letter-spacing:-0.2px;">Compression ratio to limit the compressor outlet temp Gasoline 1</div><div style="position:absolute;left:51px;top:584px;width:9px;height:1px;background:repeating-linear-gradient(90deg,#7d7d7d 0 1px,transparent 1px 2px);"></div><svg style="position:absolute;left:61px;top:577px" width="14" height="14" shape-rendering="crispEdges"><rect x="0" y="0" width="14" height="14" fill="#0000ff"/><rect x="4" y="4" width="9" height="9" fill="#fff"/><rect x="1" y="1" width="3" height="2" fill="#dcd8a8"/><rect x="5" y="1" width="3" height="2" fill="#dcd8a8"/><rect x="9" y="1" width="4" height="2" fill="#dcd8a8"/><rect x="1" y="4" width="3" height="2" fill="#dcd8a8"/><rect x="1" y="7" width="3" height="2" fill="#dcd8a8"/><rect x="1" y="10" width="3" height="3" fill="#dcd8a8"/><rect x="8" y="4" width="1" height="9" fill="#000"/><rect x="4" y="6" width="9" height="1" fill="#000"/><rect x="4" y="9" width="9" height="1" fill="#000"/></svg><div style="position:absolute;left:80.4px;top:579.48px;font-size:11.25px;line-height:11.25px;white-space:nowrap;letter-spacing:-0.2px;">Compression ratio to limit the compressor outlet temp Ethanol 1</div><div style="position:absolute;left:51px;top:600px;width:9px;height:1px;background:repeating-linear-gradient(90deg,#7d7d7d 0 1px,transparent 1px 2px);"></div><svg style="position:absolute;left:61px;top:593px" width="14" height="14" shape-rendering="crispEdges"><rect x="0" y="0" width="14" height="14" fill="#0000ff"/><rect x="4" y="4" width="9" height="9" fill="#fff"/><rect x="1" y="1" width="3" height="2" fill="#dcd8a8"/><rect x="5" y="1" width="3" height="2" fill="#dcd8a8"/><rect x="9" y="1" width="4" height="2" fill="#dcd8a8"/><rect x="1" y="4" width="3" height="2" fill="#dcd8a8"/><rect x="1" y="7" width="3" height="2" fill="#dcd8a8"/><rect x="1" y="10" width="3" height="3" fill="#dcd8a8"/><rect x="8" y="4" width="1" height="9" fill="#000"/><rect x="4" y="6" width="9" height="1" fill="#000"/><rect x="4" y="9" width="9" height="1" fill="#000"/></svg><div style="position:absolute;left:80.4px;top:595.48px;font-size:11.25px;line-height:11.25px;white-space:nowrap;letter-spacing:-0.2px;">Ignition GDI ex cam control/std valve lift (MAIN) Gasoline 1</div><div style="position:absolute;left:51px;top:616px;width:9px;height:1px;background:repeating-linear-gradient(90deg,#7d7d7d 0 1px,transparent 1px 2px);"></div><svg style="position:absolute;left:61px;top:609px" width="14" height="14" shape-rendering="crispEdges"><rect x="0" y="0" width="14" height="14" fill="#0000ff"/><rect x="4" y="4" width="9" height="9" fill="#fff"/><rect x="1" y="1" width="3" height="2" fill="#dcd8a8"/><rect x="5" y="1" width="3" height="2" fill="#dcd8a8"/><rect x="9" y="1" width="4" height="2" fill="#dcd8a8"/><rect x="1" y="4" width="3" height="2" fill="#dcd8a8"/><rect x="1" y="7" width="3" height="2" fill="#dcd8a8"/><rect x="1" y="10" width="3" height="3" fill="#dcd8a8"/><rect x="8" y="4" width="1" height="9" fill="#000"/><rect x="4" y="6" width="9" height="1" fill="#000"/><rect x="4" y="9" width="9" height="1" fill="#000"/></svg><div style="position:absolute;left:80.4px;top:611.48px;font-size:11.25px;line-height:11.25px;white-space:nowrap;letter-spacing:-0.2px;">Ignition GDI ex cam control/std valve lift (MAIN) Ethanol 1</div><div style="position:absolute;left:51px;top:632px;width:9px;height:1px;background:repeating-linear-gradient(90deg,#7d7d7d 0 1px,transparent 1px 2px);"></div><svg style="position:absolute;left:61px;top:625px" width="14" height="14" shape-rendering="crispEdges"><rect x="0" y="0" width="14" height="14" fill="#0000ff"/><rect x="4" y="4" width="9" height="9" fill="#fff"/><rect x="1" y="1" width="3" height="2" fill="#dcd8a8"/><rect x="5" y="1" width="3" height="2" fill="#dcd8a8"/><rect x="9" y="1" width="4" height="2" fill="#dcd8a8"/><rect x="1" y="4" width="3" height="2" fill="#dcd8a8"/><rect x="1" y="7" width="3" height="2" fill="#dcd8a8"/><rect x="1" y="10" width="3" height="3" fill="#dcd8a8"/><rect x="8" y="4" width="1" height="9" fill="#000"/><rect x="4" y="6" width="9" height="1" fill="#000"/><rect x="4" y="9" width="9" height="1" fill="#000"/></svg><div style="position:absolute;left:80.4px;top:627.48px;font-size:11.25px;line-height:11.25px;white-space:nowrap;letter-spacing:-0.2px;">Ignition GDI ex cam control/std valve lift (MAIN) Gasoline 2</div></div>
<div style="position:absolute;left:498px;top:132px;width:16px;height:627px;background:#f0f0f0;"></div>
<div style="position:absolute;left:499px;top:387px;width:14px;height:157px;background:#cdcdcd;"></div>
<svg style="position:absolute;left:501px;top:137px" width="10" height="8"><path d="M1 6 L5 2 L9 6" stroke="#606060" stroke-width="1.8" fill="none"/></svg>
<svg style="position:absolute;left:501px;top:745px" width="10" height="8"><path d="M1 2 L5 6 L9 2" stroke="#606060" stroke-width="1.8" fill="none"/></svg>
<div style="position:absolute;left:13px;top:759px;width:501px;height:15px;background:#f0f0f0;"></div>
<div style="position:absolute;left:30px;top:759px;width:376px;height:15px;background:#cdcdcd;"></div>
<svg style="position:absolute;left:17px;top:762px" width="8" height="10"><path d="M6 1 L2 5 L6 9" stroke="#606060" stroke-width="1.8" fill="none"/></svg>
<svg style="position:absolute;left:486px;top:762px" width="8" height="10"><path d="M2 1 L6 5 L2 9" stroke="#606060" stroke-width="1.8" fill="none"/></svg>
<svg style="position:absolute;left:502px;top:764px" width="10" height="10"><rect x="7" y="0" width="2" height="2" fill="#b8b8b8"/><rect x="4" y="3" width="2" height="2" fill="#b8b8b8"/><rect x="7" y="3" width="2" height="2" fill="#b8b8b8"/><rect x="1" y="6" width="2" height="2" fill="#b8b8b8"/><rect x="4" y="6" width="2" height="2" fill="#b8b8b8"/><rect x="7" y="6" width="2" height="2" fill="#b8b8b8"/></svg>
<div style="position:absolute;left:522px;top:80px;width:369px;height:273px;background:linear-gradient(#bccbdc 0px,#cfdceb 22px,#d7e4f2 30px,#d7e4f2 100%);border:1px solid #4a4a4a;border-radius:6px 6px 0 0;box-shadow:inset 1px 1px 0 rgba(255,255,255,0.85),inset -1px -1px 0 rgba(255,255,255,0.6);"></div>
<svg style="position:absolute;left:533px;top:93px" width="16" height="12"><rect x="0" y="2.2" width="16" height="7.6" fill="#000"/><rect x="1.60" y="0.3" width="1.7" height="2.4" rx="0.6" fill="#000"/><rect x="1.60" y="9.3" width="1.7" height="2.4" rx="0.6" fill="#000"/><rect x="4.55" y="0.3" width="1.7" height="2.4" rx="0.6" fill="#000"/><rect x="4.55" y="9.3" width="1.7" height="2.4" rx="0.6" fill="#000"/><rect x="7.50" y="0.3" width="1.7" height="2.4" rx="0.6" fill="#000"/><rect x="7.50" y="9.3" width="1.7" height="2.4" rx="0.6" fill="#000"/><rect x="10.45" y="0.3" width="1.7" height="2.4" rx="0.6" fill="#000"/><rect x="10.45" y="9.3" width="1.7" height="2.4" rx="0.6" fill="#000"/><rect x="13.40" y="0.3" width="1.7" height="2.4" rx="0.6" fill="#000"/><rect x="13.40" y="9.3" width="1.7" height="2.4" rx="0.6" fill="#000"/></svg>
<div style="position:absolute;left:552px;top:94.44px;font-size:12px;line-height:12px;white-space:nowrap;letter-spacing:0px;color:#a09e9e;">Compression ratio to prot against overspd of turbo Et...</div>
<div style="position:absolute;left:849px;top:90px;width:32px;height:18px;background:linear-gradient(#d3dde9,#c2cfdf);border:1px solid #8491a6;border-radius:3px;box-shadow:inset 0 0 0 1px rgba(255,255,255,0.75);"><svg width="30" height="16" style="position:absolute;left:0;top:0"><path d="M11.3 5.3 L18.7 10.7 M18.7 5.3 L11.3 10.7" stroke="#3f4650" stroke-width="4.4" stroke-linecap="round"/><path d="M11.3 5.3 L18.7 10.7 M18.7 5.3 L11.3 10.7" stroke="#fff" stroke-width="2.2" stroke-linecap="round"/></svg></div>
<div style="position:absolute;left:530px;top:111px;width:353px;height:234px;background:#f0f0f0;"></div>
<div style="position:absolute;left:532.5px;top:113px;width:2px;height:20px;border-left:1px solid #a0a0a0;border-right:1px solid #fff;"></div>
<div style="position:absolute;left:532.5px;top:138px;width:2px;height:21px;border-left:1px solid #a0a0a0;border-right:1px solid #fff;"></div>
<svg style="position:absolute;left:542px;top:116px" width="15" height="15" shape-rendering="crispEdges"><rect x="0.5" y="0.5" width="14" height="14" fill="#000"/><rect x="1" y="1" width="13" height="13" fill="#808000"/><rect x="3" y="1" width="9" height="6" fill="#fff"/><rect x="3" y="9" width="9" height="5" fill="#000"/><rect x="9" y="10" width="2" height="3" fill="#fff"/></svg>
<svg style="position:absolute;left:566px;top:116px" width="13" height="14"><path d="M1.5 1.5 L11.5 12.5 M11.5 1.5 L1.5 12.5" stroke="#ff0000" stroke-width="2.2"/></svg>
<svg style="position:absolute;left:588px;top:116px" width="15" height="15"><path d="M0.5 1 V14.5 H15" stroke="#000" stroke-width="1" stroke-dasharray="1 1" fill="none"/><path d="M1 6 L3 9 L6 7 L8 10 L11 7 L13 5 L14 8" stroke="#ff0000" stroke-width="1.3" fill="none"/></svg>
<svg style="position:absolute;left:610px;top:116px" width="17" height="15"><path d="M8.5 1.5 V13.5 M4.5 14 H12.5 M2 3.5 H15" stroke="#000" stroke-width="1.5" fill="none"/><circle cx="8.5" cy="1.8" r="1.3" fill="#000"/><path d="M2.5 3.5 L0.6 9 M2.5 3.5 L4.4 9 M14.5 3.5 L12.6 9 M14.5 3.5 L16.4 9" stroke="#000" stroke-width="0.8"/><path d="M0.2 8.6 Q2.5 12.2 4.8 8.6 Z M12.2 8.6 Q14.5 12.2 16.8 8.6 Z" fill="#f0f000" stroke="#000" stroke-width="0.9"/></svg>
<svg style="position:absolute;left:634px;top:116px" width="15" height="15"><rect x="1" y="1.5" width="10" height="7" fill="#fff" stroke="#0044ff" stroke-width="2"/><path d="M6.5 1.5 L1.8 13.6 H12.8 Z" fill="#fff" stroke="#000" stroke-width="2.4"/><path d="M6.5 1 V4" stroke="#000" stroke-width="2"/></svg>
<svg style="position:absolute;left:657px;top:116px" width="16" height="15"><path d="M1.5 1 L8.5 11 M8.5 1 L1.5 11" stroke="#000080" stroke-width="2.4"/><path d="M0.5 14.5 H15.5 L10 8.5 Z" fill="#ff0000"/><path d="M0.5 13.5 H8" stroke="#ff0000" stroke-width="2"/></svg>
<svg style="position:absolute;left:680px;top:116px" width="16" height="15"><path d="M1 1 L5 7 L9 1 M5 7 V14" stroke="#000080" stroke-width="2.4" fill="none"/><path d="M10.5 14.5 V5 M7.5 7 L10.5 2 L14.5 7 Z" stroke="#ff0000" stroke-width="2.2" fill="#ff0000"/></svg>
<div style="position:absolute;left:544.5px;top:142.98px;font-size:11.25px;line-height:11.25px;white-space:nowrap;letter-spacing:-0.15px;">Function:</div>
<div style="position:absolute;left:593px;top:138.5px;width:93px;height:20px;background:#e1e1e1;border:1px solid #adadad;"></div>
<div style="position:absolute;left:597px;top:143.88px;font-size:11.25px;line-height:11.25px;white-space:nowrap;letter-spacing:-0.15px;">Fill w/ Value</div>
<svg style="position:absolute;left:672px;top:146px" width="11" height="7"><path d="M1 1 L5.5 5.5 L10 1" stroke="#555" stroke-width="1" fill="none"/></svg>
<div style="position:absolute;left:691px;top:143.48px;font-size:11.25px;line-height:11.25px;white-space:nowrap;letter-spacing:-0.15px;">Value:</div>
<div style="position:absolute;left:724px;top:138px;width:48px;height:21px;background:#fff;border:1px solid #7a7a7a;"></div>
<div style="position:absolute;left:729px;top:143.48px;font-size:11.25px;line-height:11.25px;white-space:nowrap;letter-spacing:0px;">3.45</div>
<div style="position:absolute;left:774px;top:139.5px;width:49px;height:19px;background:#e1e1e1;border:1px solid #adadad;"></div>
<div style="position:absolute;left:768.50px;width:60px;top:143.98px;font-size:11.25px;line-height:11.25px;white-space:nowrap;text-align:center;letter-spacing:-0.15px;">Execute</div>
<div style="position:absolute;left:530px;top:161px;width:351px;height:159px;background:#808080;border-top:2px solid #6a6a6a;border-left:1px solid #6a6a6a;"></div>
<div style="position:absolute;left:532px;top:163px;width:348px;height:15px;background:#f0f0f0;border-top:1px solid #fff;border-left:1px solid #fff;border-right:1px solid #a0a0a0;border-bottom:1px solid #a0a0a0;"></div>
<div style="position:absolute;left:537px;top:166.34px;font-size:12px;line-height:12px;white-space:nowrap;letter-spacing:-0.05px;font-weight:bold;">Compression ratio to prot against overspd of turbo Ethan...</div>
<div style="position:absolute;left:531px;top:178px;width:350px;height:1px;background:#fff;"></div>
<div style="position:absolute;left:531px;top:179px;width:322px;height:135px;background:#e3e3e3;"></div>
<div style="position:absolute;left:532px;top:179px;width:45px;height:14px;background:#f4f4f4;border:1px solid #a9a9a9;box-shadow:inset 1px 1px 0 #fff;"></div>
<div style="position:absolute;left:578px;top:179px;width:45px;height:14px;background:#dedede;border:1px solid #a9a9a9;box-shadow:inset 1px 1px 0 #fff;"></div>
<div style="position:absolute;left:570.50px;width:60px;top:182.69px;font-size:11px;line-height:11px;white-space:nowrap;text-align:center;letter-spacing:-0.2px;">550.00</div>
<div style="position:absolute;left:624px;top:179px;width:45px;height:14px;background:#f4f4f4;border:1px solid #a9a9a9;box-shadow:inset 1px 1px 0 #fff;"></div>
<div style="position:absolute;left:616.50px;width:60px;top:182.69px;font-size:11px;line-height:11px;white-space:nowrap;text-align:center;letter-spacing:-0.2px;">700.00</div>
<div style="position:absolute;left:670px;top:179px;width:45px;height:14px;background:#f4f4f4;border:1px solid #a9a9a9;box-shadow:inset 1px 1px 0 #fff;"></div>
<div style="position:absolute;left:662.50px;width:60px;top:182.69px;font-size:11px;line-height:11px;white-space:nowrap;text-align:center;letter-spacing:-0.2px;">750.00</div>
<div style="position:absolute;left:716px;top:179px;width:45px;height:14px;background:#f4f4f4;border:1px solid #a9a9a9;box-shadow:inset 1px 1px 0 #fff;"></div>
<div style="position:absolute;left:708.50px;width:60px;top:182.69px;font-size:11px;line-height:11px;white-space:nowrap;text-align:center;letter-spacing:-0.2px;">800.00</div>
<div style="position:absolute;left:762px;top:179px;width:45px;height:14px;background:#f4f4f4;border:1px solid #a9a9a9;box-shadow:inset 1px 1px 0 #fff;"></div>
<div style="position:absolute;left:754.50px;width:60px;top:182.69px;font-size:11px;line-height:11px;white-space:nowrap;text-align:center;letter-spacing:-0.2px;">900.00</div>
<div style="position:absolute;left:808px;top:179px;width:45px;height:14px;background:#f4f4f4;border:1px solid #a9a9a9;box-shadow:inset 1px 1px 0 #fff;"></div>
<div style="position:absolute;left:800.50px;width:60px;top:182.69px;font-size:11px;line-height:11px;white-space:nowrap;text-align:center;letter-spacing:-0.2px;">1000.00</div>
<div style="position:absolute;left:532px;top:195px;width:45px;height:13px;background:#dedede;border:1px solid #a9a9a9;box-shadow:inset 1px 1px 0 #fff;"></div>
<div style="position:absolute;right:1069px;top:197.19px;font-size:11px;line-height:11px;white-space:nowrap;text-align:right;letter-spacing:-0.2px;">2000.0</div>
<div style="position:absolute;left:578.5px;top:195px;width:44px;height:13px;background:#b2c6c6;border:2px solid #222;margin:-1px 0 0 -0.5px;height:15px;width:45.5px;"></div>
<div style="position:absolute;right:1023.0px;top:196.69px;font-size:11px;line-height:11px;white-space:nowrap;text-align:right;letter-spacing:-0.25px;">1.800</div>
<div style="position:absolute;left:624.5px;top:195px;width:44px;height:13px;background:#a9d4d4;"></div>
<div style="position:absolute;right:976.0px;top:196.69px;font-size:11px;line-height:11px;white-space:nowrap;text-align:right;letter-spacing:-0.25px;">1.800</div>
<div style="position:absolute;left:670.5px;top:195px;width:44px;height:13px;background:#a9d4d4;"></div>
<div style="position:absolute;right:930.0px;top:196.69px;font-size:11px;line-height:11px;white-space:nowrap;text-align:right;letter-spacing:-0.25px;">1.800</div>
<div style="position:absolute;left:716.5px;top:195px;width:44px;height:13px;background:#a9d4d4;"></div>
<div style="position:absolute;right:884.0px;top:196.69px;font-size:11px;line-height:11px;white-space:nowrap;text-align:right;letter-spacing:-0.25px;">1.800</div>
<div style="position:absolute;left:762.5px;top:195px;width:44px;height:13px;background:#a9d4d4;"></div>
<div style="position:absolute;right:838.0px;top:196.69px;font-size:11px;line-height:11px;white-space:nowrap;text-align:right;letter-spacing:-0.25px;">1.800</div>
<div style="position:absolute;left:808.5px;top:195px;width:44px;height:13px;background:#a9d4d4;"></div>
<div style="position:absolute;right:792.0px;top:196.69px;font-size:11px;line-height:11px;white-space:nowrap;text-align:right;letter-spacing:-0.25px;">1.800</div>
<div style="position:absolute;left:532px;top:210px;width:45px;height:13px;background:#f4f4f4;border:1px solid #a9a9a9;box-shadow:inset 1px 1px 0 #fff;"></div>
<div style="position:absolute;right:1069px;top:212.19px;font-size:11px;line-height:11px;white-space:nowrap;text-align:right;letter-spacing:-0.2px;">3000.0</div>
<div style="position:absolute;left:578.5px;top:210px;width:44px;height:13px;background:#b3d2d2;"></div>
<div style="position:absolute;right:1022.0px;top:211.69px;font-size:11px;line-height:11px;white-space:nowrap;text-align:right;letter-spacing:-0.25px;">2.200</div>
<div style="position:absolute;left:624.5px;top:210px;width:44px;height:13px;background:#b3d2d2;"></div>
<div style="position:absolute;right:976.0px;top:211.69px;font-size:11px;line-height:11px;white-space:nowrap;text-align:right;letter-spacing:-0.25px;">2.200</div>
<div style="position:absolute;left:670.5px;top:210px;width:44px;height:13px;background:#b3d2d2;"></div>
<div style="position:absolute;right:930.0px;top:211.69px;font-size:11px;line-height:11px;white-space:nowrap;text-align:right;letter-spacing:-0.25px;">2.200</div>
<div style="position:absolute;left:716.5px;top:210px;width:44px;height:13px;background:#b3d2d2;"></div>
<div style="position:absolute;right:884.0px;top:211.69px;font-size:11px;line-height:11px;white-space:nowrap;text-align:right;letter-spacing:-0.25px;">2.200</div>
<div style="position:absolute;left:762.5px;top:210px;width:44px;height:13px;background:#b3d2d2;"></div>
<div style="position:absolute;right:838.0px;top:211.69px;font-size:11px;line-height:11px;white-space:nowrap;text-align:right;letter-spacing:-0.25px;">2.200</div>
<div style="position:absolute;left:808.5px;top:210px;width:44px;height:13px;background:#b3d2d2;"></div>
<div style="position:absolute;right:792.0px;top:211.69px;font-size:11px;line-height:11px;white-space:nowrap;text-align:right;letter-spacing:-0.25px;">2.200</div>
<div style="position:absolute;left:532px;top:225px;width:45px;height:13px;background:#f4f4f4;border:1px solid #a9a9a9;box-shadow:inset 1px 1px 0 #fff;"></div>
<div style="position:absolute;right:1069px;top:227.19px;font-size:11px;line-height:11px;white-space:nowrap;text-align:right;letter-spacing:-0.2px;">3500.0</div>
<div style="position:absolute;left:578.5px;top:225px;width:44px;height:13px;background:#bcc7c7;"></div>
<div style="position:absolute;right:1022.0px;top:226.69px;font-size:11px;line-height:11px;white-space:nowrap;text-align:right;letter-spacing:-0.25px;">2.750</div>
<div style="position:absolute;left:624.5px;top:225px;width:44px;height:13px;background:#bcc7c7;"></div>
<div style="position:absolute;right:976.0px;top:226.69px;font-size:11px;line-height:11px;white-space:nowrap;text-align:right;letter-spacing:-0.25px;">2.750</div>
<div style="position:absolute;left:670.5px;top:225px;width:44px;height:13px;background:#bcc7c7;"></div>
<div style="position:absolute;right:930.0px;top:226.69px;font-size:11px;line-height:11px;white-space:nowrap;text-align:right;letter-spacing:-0.25px;">2.750</div>
<div style="position:absolute;left:716.5px;top:225px;width:44px;height:13px;background:#bcc7c7;"></div>
<div style="position:absolute;right:884.0px;top:226.69px;font-size:11px;line-height:11px;white-space:nowrap;text-align:right;letter-spacing:-0.25px;">2.750</div>
<div style="position:absolute;left:762.5px;top:225px;width:44px;height:13px;background:#bcc7c7;"></div>
<div style="position:absolute;right:838.0px;top:226.69px;font-size:11px;line-height:11px;white-space:nowrap;text-align:right;letter-spacing:-0.25px;">2.750</div>
<div style="position:absolute;left:808.5px;top:225px;width:44px;height:13px;background:#bcc7c7;"></div>
<div style="position:absolute;right:792.0px;top:226.69px;font-size:11px;line-height:11px;white-space:nowrap;text-align:right;letter-spacing:-0.25px;">2.750</div>
<div style="position:absolute;left:532px;top:240px;width:45px;height:13px;background:#f4f4f4;border:1px solid #a9a9a9;box-shadow:inset 1px 1px 0 #fff;"></div>
<div style="position:absolute;right:1069px;top:242.19px;font-size:11px;line-height:11px;white-space:nowrap;text-align:right;letter-spacing:-0.2px;">4000.0</div>
<div style="position:absolute;left:578.5px;top:240px;width:44px;height:13px;background:#bcc7c7;"></div>
<div style="position:absolute;right:1022.0px;top:241.69px;font-size:11px;line-height:11px;white-space:nowrap;text-align:right;letter-spacing:-0.25px;">2.750</div>
<div style="position:absolute;left:624.5px;top:240px;width:44px;height:13px;background:#bcc7c7;"></div>
<div style="position:absolute;right:976.0px;top:241.69px;font-size:11px;line-height:11px;white-space:nowrap;text-align:right;letter-spacing:-0.25px;">2.750</div>
<div style="position:absolute;left:670.5px;top:240px;width:44px;height:13px;background:#bcc7c7;"></div>
<div style="position:absolute;right:930.0px;top:241.69px;font-size:11px;line-height:11px;white-space:nowrap;text-align:right;letter-spacing:-0.25px;">2.750</div>
<div style="position:absolute;left:716.5px;top:240px;width:44px;height:13px;background:#bcc7c7;"></div>
<div style="position:absolute;right:884.0px;top:241.69px;font-size:11px;line-height:11px;white-space:nowrap;text-align:right;letter-spacing:-0.25px;">2.750</div>
<div style="position:absolute;left:762.5px;top:240px;width:44px;height:13px;background:#bcc7c7;"></div>
<div style="position:absolute;right:838.0px;top:241.69px;font-size:11px;line-height:11px;white-space:nowrap;text-align:right;letter-spacing:-0.25px;">2.750</div>
<div style="position:absolute;left:808.5px;top:240px;width:44px;height:13px;background:#bcc7c7;"></div>
<div style="position:absolute;right:792.0px;top:241.69px;font-size:11px;line-height:11px;white-space:nowrap;text-align:right;letter-spacing:-0.25px;">2.750</div>
<div style="position:absolute;left:532px;top:255px;width:45px;height:13px;background:#f4f4f4;border:1px solid #a9a9a9;box-shadow:inset 1px 1px 0 #fff;"></div>
<div style="position:absolute;right:1069px;top:257.19px;font-size:11px;line-height:11px;white-space:nowrap;text-align:right;letter-spacing:-0.2px;">5000.0</div>
<div style="position:absolute;left:578.5px;top:255px;width:44px;height:13px;background:#bcc7c7;"></div>
<div style="position:absolute;right:1022.0px;top:256.69px;font-size:11px;line-height:11px;white-space:nowrap;text-align:right;letter-spacing:-0.25px;">2.750</div>
<div style="position:absolute;left:624.5px;top:255px;width:44px;height:13px;background:#bcc7c7;"></div>
<div style="position:absolute;right:976.0px;top:256.69px;font-size:11px;line-height:11px;white-space:nowrap;text-align:right;letter-spacing:-0.25px;">2.750</div>
<div style="position:absolute;left:670.5px;top:255px;width:44px;height:13px;background:#bcc7c7;"></div>
<div style="position:absolute;right:930.0px;top:256.69px;font-size:11px;line-height:11px;white-space:nowrap;text-align:right;letter-spacing:-0.25px;">2.750</div>
<div style="position:absolute;left:716.5px;top:255px;width:44px;height:13px;background:#bcc7c7;"></div>
<div style="position:absolute;right:884.0px;top:256.69px;font-size:11px;line-height:11px;white-space:nowrap;text-align:right;letter-spacing:-0.25px;">2.750</div>
<div style="position:absolute;left:762.5px;top:255px;width:44px;height:13px;background:#bcc7c7;"></div>
<div style="position:absolute;right:838.0px;top:256.69px;font-size:11px;line-height:11px;white-space:nowrap;text-align:right;letter-spacing:-0.25px;">2.750</div>
<div style="position:absolute;left:808.5px;top:255px;width:44px;height:13px;background:#bcc7c7;"></div>
<div style="position:absolute;right:792.0px;top:256.69px;font-size:11px;line-height:11px;white-space:nowrap;text-align:right;letter-spacing:-0.25px;">2.750</div>
<div style="position:absolute;left:532px;top:270px;width:45px;height:13px;background:#f4f4f4;border:1px solid #a9a9a9;box-shadow:inset 1px 1px 0 #fff;"></div>
<div style="position:absolute;right:1069px;top:272.19px;font-size:11px;line-height:11px;white-space:nowrap;text-align:right;letter-spacing:-0.2px;">6000.0</div>
<div style="position:absolute;left:578.5px;top:270px;width:44px;height:13px;background:#bcc7c7;"></div>
<div style="position:absolute;right:1022.0px;top:271.69px;font-size:11px;line-height:11px;white-space:nowrap;text-align:right;letter-spacing:-0.25px;">2.750</div>
<div style="position:absolute;left:624.5px;top:270px;width:44px;height:13px;background:#bcc7c7;"></div>
<div style="position:absolute;right:976.0px;top:271.69px;font-size:11px;line-height:11px;white-space:nowrap;text-align:right;letter-spacing:-0.25px;">2.750</div>
<div style="position:absolute;left:670.5px;top:270px;width:44px;height:13px;background:#bcc7c7;"></div>
<div style="position:absolute;right:930.0px;top:271.69px;font-size:11px;line-height:11px;white-space:nowrap;text-align:right;letter-spacing:-0.25px;">2.750</div>
<div style="position:absolute;left:716.5px;top:270px;width:44px;height:13px;background:#bcc7c7;"></div>
<div style="position:absolute;right:884.0px;top:271.69px;font-size:11px;line-height:11px;white-space:nowrap;text-align:right;letter-spacing:-0.25px;">2.750</div>
<div style="position:absolute;left:762.5px;top:270px;width:44px;height:13px;background:#bcc7c7;"></div>
<div style="position:absolute;right:838.0px;top:271.69px;font-size:11px;line-height:11px;white-space:nowrap;text-align:right;letter-spacing:-0.25px;">2.750</div>
<div style="position:absolute;left:808.5px;top:270px;width:44px;height:13px;background:#bcc7c7;"></div>
<div style="position:absolute;right:792.0px;top:271.69px;font-size:11px;line-height:11px;white-space:nowrap;text-align:right;letter-spacing:-0.25px;">2.750</div>
<div style="position:absolute;left:532px;top:285px;width:45px;height:13px;background:#f4f4f4;border:1px solid #a9a9a9;box-shadow:inset 1px 1px 0 #fff;"></div>
<div style="position:absolute;right:1069px;top:287.19px;font-size:11px;line-height:11px;white-space:nowrap;text-align:right;letter-spacing:-0.2px;">7000.0</div>
<div style="position:absolute;left:578.5px;top:285px;width:44px;height:13px;background:#bcc7c7;"></div>
<div style="position:absolute;right:1022.0px;top:286.69px;font-size:11px;line-height:11px;white-space:nowrap;text-align:right;letter-spacing:-0.25px;">2.750</div>
<div style="position:absolute;left:624.5px;top:285px;width:44px;height:13px;background:#bcc7c7;"></div>
<div style="position:absolute;right:976.0px;top:286.69px;font-size:11px;line-height:11px;white-space:nowrap;text-align:right;letter-spacing:-0.25px;">2.750</div>
<div style="position:absolute;left:670.5px;top:285px;width:44px;height:13px;background:#bcc7c7;"></div>
<div style="position:absolute;right:930.0px;top:286.69px;font-size:11px;line-height:11px;white-space:nowrap;text-align:right;letter-spacing:-0.25px;">2.750</div>
<div style="position:absolute;left:716.5px;top:285px;width:44px;height:13px;background:#bcc7c7;"></div>
<div style="position:absolute;right:884.0px;top:286.69px;font-size:11px;line-height:11px;white-space:nowrap;text-align:right;letter-spacing:-0.25px;">2.750</div>
<div style="position:absolute;left:762.5px;top:285px;width:44px;height:13px;background:#bcc7c7;"></div>
<div style="position:absolute;right:838.0px;top:286.69px;font-size:11px;line-height:11px;white-space:nowrap;text-align:right;letter-spacing:-0.25px;">2.750</div>
<div style="position:absolute;left:808.5px;top:285px;width:44px;height:13px;background:#bcc7c7;"></div>
<div style="position:absolute;right:792.0px;top:286.69px;font-size:11px;line-height:11px;white-space:nowrap;text-align:right;letter-spacing:-0.25px;">2.750</div>
<div style="position:absolute;left:532px;top:300px;width:45px;height:13px;background:#f4f4f4;border:1px solid #a9a9a9;box-shadow:inset 1px 1px 0 #fff;"></div>
<div style="position:absolute;right:1069px;top:302.19px;font-size:11px;line-height:11px;white-space:nowrap;text-align:right;letter-spacing:-0.2px;">8000.0</div>
<div style="position:absolute;left:578.5px;top:300px;width:44px;height:13px;background:#bcc7c7;"></div>
<div style="position:absolute;right:1022.0px;top:301.69px;font-size:11px;line-height:11px;white-space:nowrap;text-align:right;letter-spacing:-0.25px;">2.750</div>
<div style="position:absolute;left:624.5px;top:300px;width:44px;height:13px;background:#bcc7c7;"></div>
<div style="position:absolute;right:976.0px;top:301.69px;font-size:11px;line-height:11px;white-space:nowrap;text-align:right;letter-spacing:-0.25px;">2.750</div>
<div style="position:absolute;left:670.5px;top:300px;width:44px;height:13px;background:#bcc7c7;"></div>
<div style="position:absolute;right:930.0px;top:301.69px;font-size:11px;line-height:11px;white-space:nowrap;text-align:right;letter-spacing:-0.25px;">2.750</div>
<div style="position:absolute;left:716.5px;top:300px;width:44px;height:13px;background:#bcc7c7;"></div>
<div style="position:absolute;right:884.0px;top:301.69px;font-size:11px;line-height:11px;white-space:nowrap;text-align:right;letter-spacing:-0.25px;">2.750</div>
<div style="position:absolute;left:762.5px;top:300px;width:44px;height:13px;background:#bcc7c7;"></div>
<div style="position:absolute;right:838.0px;top:301.69px;font-size:11px;line-height:11px;white-space:nowrap;text-align:right;letter-spacing:-0.25px;">2.750</div>
<div style="position:absolute;left:808.5px;top:300px;width:44px;height:13px;background:#bcc7c7;"></div>
<div style="position:absolute;right:792.0px;top:301.69px;font-size:11px;line-height:11px;white-space:nowrap;text-align:right;letter-spacing:-0.25px;">2.750</div>
<div style="position:absolute;left:530px;top:321px;width:353px;height:1px;background:#fff;"></div>
<div style="position:absolute;left:604px;top:324px;width:1px;height:19px;background:#c8c8c8;"></div>
<div style="position:absolute;left:679px;top:324px;width:1px;height:19px;background:#c8c8c8;"></div>
<svg style="position:absolute;left:873px;top:336px" width="8" height="8"><rect x="6" y="0" width="2" height="2" fill="#b0b0b0"/><rect x="3" y="3" width="2" height="2" fill="#b0b0b0"/><rect x="6" y="3" width="2" height="2" fill="#b0b0b0"/><rect x="0" y="6" width="2" height="2" fill="#b0b0b0"/><rect x="3" y="6" width="2" height="2" fill="#b0b0b0"/><rect x="6" y="6" width="2" height="2" fill="#b0b0b0"/></svg>
<div style="position:absolute;left:524px;top:355px;width:369px;height:273px;background:linear-gradient(#bccbdc 0px,#cfdceb 22px,#d7e4f2 30px,#d7e4f2 100%);border:1px solid #4a4a4a;border-radius:6px 6px 0 0;box-shadow:inset 1px 1px 0 rgba(255,255,255,0.85),inset -1px -1px 0 rgba(255,255,255,0.6);"></div>
<svg style="position:absolute;left:535px;top:368px" width="16" height="12"><rect x="0" y="2.2" width="16" height="7.6" fill="#000"/><rect x="1.60" y="0.3" width="1.7" height="2.4" rx="0.6" fill="#000"/><rect x="1.60" y="9.3" width="1.7" height="2.4" rx="0.6" fill="#000"/><rect x="4.55" y="0.3" width="1.7" height="2.4" rx="0.6" fill="#000"/><rect x="4.55" y="9.3" width="1.7" height="2.4" rx="0.6" fill="#000"/><rect x="7.50" y="0.3" width="1.7" height="2.4" rx="0.6" fill="#000"/><rect x="7.50" y="9.3" width="1.7" height="2.4" rx="0.6" fill="#000"/><rect x="10.45" y="0.3" width="1.7" height="2.4" rx="0.6" fill="#000"/><rect x="10.45" y="9.3" width="1.7" height="2.4" rx="0.6" fill="#000"/><rect x="13.40" y="0.3" width="1.7" height="2.4" rx="0.6" fill="#000"/><rect x="13.40" y="9.3" width="1.7" height="2.4" rx="0.6" fill="#000"/></svg>
<div style="position:absolute;left:554px;top:369.44px;font-size:12px;line-height:12px;white-space:nowrap;letter-spacing:0px;color:#a09e9e;">Compression ratio to prot against overspd of turbo Ga...</div>
<div style="position:absolute;left:851px;top:365px;width:32px;height:18px;background:linear-gradient(#d3dde9,#c2cfdf);border:1px solid #8491a6;border-radius:3px;box-shadow:inset 0 0 0 1px rgba(255,255,255,0.75);"><svg width="30" height="16" style="position:absolute;left:0;top:0"><path d="M11.3 5.3 L18.7 10.7 M18.7 5.3 L11.3 10.7" stroke="#3f4650" stroke-width="4.4" stroke-linecap="round"/><path d="M11.3 5.3 L18.7 10.7 M18.7 5.3 L11.3 10.7" stroke="#fff" stroke-width="2.2" stroke-linecap="round"/></svg></div>
<div style="position:absolute;left:532px;top:386px;width:353px;height:234px;background:#f0f0f0;"></div>
<div style="position:absolute;left:534.5px;top:388px;width:2px;height:20px;border-left:1px solid #a0a0a0;border-right:1px solid #fff;"></div>
<div style="position:absolute;left:534.5px;top:413px;width:2px;height:21px;border-left:1px solid #a0a0a0;border-right:1px solid #fff;"></div>
<svg style="position:absolute;left:544px;top:391px" width="15" height="15" shape-rendering="crispEdges"><rect x="0.5" y="0.5" width="14" height="14" fill="#000"/><rect x="1" y="1" width="13" height="13" fill="#808000"/><rect x="3" y="1" width="9" height="6" fill="#fff"/><rect x="3" y="9" width="9" height="5" fill="#000"/><rect x="9" y="10" width="2" height="3" fill="#fff"/></svg>
<svg style="position:absolute;left:568px;top:391px" width="13" height="14"><path d="M1.5 1.5 L11.5 12.5 M11.5 1.5 L1.5 12.5" stroke="#ff0000" stroke-width="2.2"/></svg>
<svg style="position:absolute;left:590px;top:391px" width="15" height="15"><path d="M0.5 1 V14.5 H15" stroke="#000" stroke-width="1" stroke-dasharray="1 1" fill="none"/><path d="M1 6 L3 9 L6 7 L8 10 L11 7 L13 5 L14 8" stroke="#ff0000" stroke-width="1.3" fill="none"/></svg>
<svg style="position:absolute;left:612px;top:391px" width="17" height="15"><path d="M8.5 1.5 V13.5 M4.5 14 H12.5 M2 3.5 H15" stroke="#000" stroke-width="1.5" fill="none"/><circle cx="8.5" cy="1.8" r="1.3" fill="#000"/><path d="M2.5 3.5 L0.6 9 M2.5 3.5 L4.4 9 M14.5 3.5 L12.6 9 M14.5 3.5 L16.4 9" stroke="#000" stroke-width="0.8"/><path d="M0.2 8.6 Q2.5 12.2 4.8 8.6 Z M12.2 8.6 Q14.5 12.2 16.8 8.6 Z" fill="#f0f000" stroke="#000" stroke-width="0.9"/></svg>
<svg style="position:absolute;left:636px;top:391px" width="15" height="15"><rect x="1" y="1.5" width="10" height="7" fill="#fff" stroke="#0044ff" stroke-width="2"/><path d="M6.5 1.5 L1.8 13.6 H12.8 Z" fill="#fff" stroke="#000" stroke-width="2.4"/><path d="M6.5 1 V4" stroke="#000" stroke-width="2"/></svg>
<svg style="position:absolute;left:659px;top:391px" width="16" height="15"><path d="M1.5 1 L8.5 11 M8.5 1 L1.5 11" stroke="#000080" stroke-width="2.4"/><path d="M0.5 14.5 H15.5 L10 8.5 Z" fill="#ff0000"/><path d="M0.5 13.5 H8" stroke="#ff0000" stroke-width="2"/></svg>
<svg style="position:absolute;left:682px;top:391px" width="16" height="15"><path d="M1 1 L5 7 L9 1 M5 7 V14" stroke="#000080" stroke-width="2.4" fill="none"/><path d="M10.5 14.5 V5 M7.5 7 L10.5 2 L14.5 7 Z" stroke="#ff0000" stroke-width="2.2" fill="#ff0000"/></svg>
<div style="position:absolute;left:546.5px;top:417.98px;font-size:11.25px;line-height:11.25px;white-space:nowrap;letter-spacing:-0.15px;">Function:</div>
<div style="position:absolute;left:595px;top:413.5px;width:93px;height:20px;background:#e1e1e1;border:1px solid #adadad;"></div>
<div style="position:absolute;left:599px;top:418.88px;font-size:11.25px;line-height:11.25px;white-space:nowrap;letter-spacing:-0.15px;">Fill w/ Value</div>
<svg style="position:absolute;left:674px;top:421px" width="11" height="7"><path d="M1 1 L5.5 5.5 L10 1" stroke="#555" stroke-width="1" fill="none"/></svg>
<div style="position:absolute;left:693px;top:418.48px;font-size:11.25px;line-height:11.25px;white-space:nowrap;letter-spacing:-0.15px;">Value:</div>
<div style="position:absolute;left:726px;top:413px;width:48px;height:21px;background:#fff;border:1px solid #7a7a7a;"></div>
<div style="position:absolute;left:731px;top:418.48px;font-size:11.25px;line-height:11.25px;white-space:nowrap;letter-spacing:0px;">3.45</div>
<div style="position:absolute;left:776px;top:414.5px;width:49px;height:19px;background:#e1e1e1;border:1px solid #adadad;"></div>
<div style="position:absolute;left:770.50px;width:60px;top:418.98px;font-size:11.25px;line-height:11.25px;white-space:nowrap;text-align:center;letter-spacing:-0.15px;">Execute</div>
<div style="position:absolute;left:532px;top:436px;width:351px;height:159px;background:#808080;border-top:2px solid #6a6a6a;border-left:1px solid #6a6a6a;"></div>
<div style="position:absolute;left:534px;top:438px;width:348px;height:15px;background:#f0f0f0;border-top:1px solid #fff;border-left:1px solid #fff;border-right:1px solid #a0a0a0;border-bottom:1px solid #a0a0a0;"></div>
<div style="position:absolute;left:539px;top:441.34px;font-size:12px;line-height:12px;white-space:nowrap;letter-spacing:-0.05px;font-weight:bold;">Compression ratio to prot against overspd of turbo Gasoli...</div>
<div style="position:absolute;left:533px;top:453px;width:350px;height:1px;background:#fff;"></div>
<div style="position:absolute;left:533px;top:454px;width:322px;height:135px;background:#e3e3e3;"></div>
<div style="position:absolute;left:534px;top:454px;width:45px;height:14px;background:#f4f4f4;border:1px solid #a9a9a9;box-shadow:inset 1px 1px 0 #fff;"></div>
<div style="position:absolute;left:580px;top:454px;width:45px;height:14px;background:#dedede;border:1px solid #a9a9a9;box-shadow:inset 1px 1px 0 #fff;"></div>
<div style="position:absolute;left:572.50px;width:60px;top:457.69px;font-size:11px;line-height:11px;white-space:nowrap;text-align:center;letter-spacing:-0.2px;">550.00</div>
<div style="position:absolute;left:626px;top:454px;width:45px;height:14px;background:#f4f4f4;border:1px solid #a9a9a9;box-shadow:inset 1px 1px 0 #fff;"></div>
<div style="position:absolute;left:618.50px;width:60px;top:457.69px;font-size:11px;line-height:11px;white-space:nowrap;text-align:center;letter-spacing:-0.2px;">700.00</div>
<div style="position:absolute;left:672px;top:454px;width:45px;height:14px;background:#f4f4f4;border:1px solid #a9a9a9;box-shadow:inset 1px 1px 0 #fff;"></div>
<div style="position:absolute;left:664.50px;width:60px;top:457.69px;font-size:11px;line-height:11px;white-space:nowrap;text-align:center;letter-spacing:-0.2px;">750.00</div>
<div style="position:absolute;left:718px;top:454px;width:45px;height:14px;background:#f4f4f4;border:1px solid #a9a9a9;box-shadow:inset 1px 1px 0 #fff;"></div>
<div style="position:absolute;left:710.50px;width:60px;top:457.69px;font-size:11px;line-height:11px;white-space:nowrap;text-align:center;letter-spacing:-0.2px;">800.00</div>
<div style="position:absolute;left:764px;top:454px;width:45px;height:14px;background:#f4f4f4;border:1px solid #a9a9a9;box-shadow:inset 1px 1px 0 #fff;"></div>
<div style="position:absolute;left:756.50px;width:60px;top:457.69px;font-size:11px;line-height:11px;white-space:nowrap;text-align:center;letter-spacing:-0.2px;">900.00</div>
<div style="position:absolute;left:810px;top:454px;width:45px;height:14px;background:#f4f4f4;border:1px solid #a9a9a9;box-shadow:inset 1px 1px 0 #fff;"></div>
<div style="position:absolute;left:802.50px;width:60px;top:457.69px;font-size:11px;line-height:11px;white-space:nowrap;text-align:center;letter-spacing:-0.2px;">1000.00</div>
<div style="position:absolute;left:534px;top:470px;width:45px;height:13px;background:#dedede;border:1px solid #a9a9a9;box-shadow:inset 1px 1px 0 #fff;"></div>
<div style="position:absolute;right:1067px;top:472.19px;font-size:11px;line-height:11px;white-space:nowrap;text-align:right;letter-spacing:-0.2px;">2000.0</div>
<div style="position:absolute;left:580.5px;top:470px;width:44px;height:13px;background:#b2c6c6;border:2px solid #222;margin:-1px 0 0 -0.5px;height:15px;width:45.5px;"></div>
<div style="position:absolute;right:1021.0px;top:471.69px;font-size:11px;line-height:11px;white-space:nowrap;text-align:right;letter-spacing:-0.25px;">1.800</div>
<div style="position:absolute;left:626.5px;top:470px;width:44px;height:13px;background:#a9d4d4;"></div>
<div style="position:absolute;right:974.0px;top:471.69px;font-size:11px;line-height:11px;white-space:nowrap;text-align:right;letter-spacing:-0.25px;">1.800</div>
<div style="position:absolute;left:672.5px;top:470px;width:44px;height:13px;background:#a9d4d4;"></div>
<div style="position:absolute;right:928.0px;top:471.69px;font-size:11px;line-height:11px;white-space:nowrap;text-align:right;letter-spacing:-0.25px;">1.800</div>
<div style="position:absolute;left:718.5px;top:470px;width:44px;height:13px;background:#a9d4d4;"></div>
<div style="position:absolute;right:882.0px;top:471.69px;font-size:11px;line-height:11px;white-space:nowrap;text-align:right;letter-spacing:-0.25px;">1.800</div>
<div style="position:absolute;left:764.5px;top:470px;width:44px;height:13px;background:#a9d4d4;"></div>
<div style="position:absolute;right:836.0px;top:471.69px;font-size:11px;line-height:11px;white-space:nowrap;text-align:right;letter-spacing:-0.25px;">1.800</div>
<div style="position:absolute;left:810.5px;top:470px;width:44px;height:13px;background:#a9d4d4;"></div>
<div style="position:absolute;right:790.0px;top:471.69px;font-size:11px;line-height:11px;white-space:nowrap;text-align:right;letter-spacing:-0.25px;">1.800</div>
<div style="position:absolute;left:534px;top:485px;width:45px;height:13px;background:#f4f4f4;border:1px solid #a9a9a9;box-shadow:inset 1px 1px 0 #fff;"></div>
<div style="position:absolute;right:1067px;top:487.19px;font-size:11px;line-height:11px;white-space:nowrap;text-align:right;letter-spacing:-0.2px;">3000.0</div>
<div style="position:absolute;left:580.5px;top:485px;width:44px;height:13px;background:#b3d2d2;"></div>
<div style="position:absolute;right:1020.0px;top:486.69px;font-size:11px;line-height:11px;white-space:nowrap;text-align:right;letter-spacing:-0.25px;">2.200</div>
<div style="position:absolute;left:626.5px;top:485px;width:44px;height:13px;background:#b3d2d2;"></div>
<div style="position:absolute;right:974.0px;top:486.69px;font-size:11px;line-height:11px;white-space:nowrap;text-align:right;letter-spacing:-0.25px;">2.200</div>
<div style="position:absolute;left:672.5px;top:485px;width:44px;height:13px;background:#b3d2d2;"></div>
<div style="position:absolute;right:928.0px;top:486.69px;font-size:11px;line-height:11px;white-space:nowrap;text-align:right;letter-spacing:-0.25px;">2.200</div>
<div style="position:absolute;left:718.5px;top:485px;width:44px;height:13px;background:#b3d2d2;"></div>
<div style="position:absolute;right:882.0px;top:486.69px;font-size:11px;line-height:11px;white-space:nowrap;text-align:right;letter-spacing:-0.25px;">2.200</div>
<div style="position:absolute;left:764.5px;top:485px;width:44px;height:13px;background:#b3d2d2;"></div>
<div style="position:absolute;right:836.0px;top:486.69px;font-size:11px;line-height:11px;white-space:nowrap;text-align:right;letter-spacing:-0.25px;">2.200</div>
<div style="position:absolute;left:810.5px;top:485px;width:44px;height:13px;background:#b3d2d2;"></div>
<div style="position:absolute;right:790.0px;top:486.69px;font-size:11px;line-height:11px;white-space:nowrap;text-align:right;letter-spacing:-0.25px;">2.200</div>
<div style="position:absolute;left:534px;top:500px;width:45px;height:13px;background:#f4f4f4;border:1px solid #a9a9a9;box-shadow:inset 1px 1px 0 #fff;"></div>
<div style="position:absolute;right:1067px;top:502.19px;font-size:11px;line-height:11px;white-space:nowrap;text-align:right;letter-spacing:-0.2px;">3500.0</div>
<div style="position:absolute;left:580.5px;top:500px;width:44px;height:13px;background:#b9cbcb;"></div>
<div style="position:absolute;right:1020.0px;top:501.69px;font-size:11px;line-height:11px;white-space:nowrap;text-align:right;letter-spacing:-0.25px;">2.500</div>
<div style="position:absolute;left:626.5px;top:500px;width:44px;height:13px;background:#b9cbcb;"></div>
<div style="position:absolute;right:974.0px;top:501.69px;font-size:11px;line-height:11px;white-space:nowrap;text-align:right;letter-spacing:-0.25px;">2.500</div>
<div style="position:absolute;left:672.5px;top:500px;width:44px;height:13px;background:#b9cbcb;"></div>
<div style="position:absolute;right:928.0px;top:501.69px;font-size:11px;line-height:11px;white-space:nowrap;text-align:right;letter-spacing:-0.25px;">2.500</div>
<div style="position:absolute;left:718.5px;top:500px;width:44px;height:13px;background:#b9cbcb;"></div>
<div style="position:absolute;right:882.0px;top:501.69px;font-size:11px;line-height:11px;white-space:nowrap;text-align:right;letter-spacing:-0.25px;">2.500</div>
<div style="position:absolute;left:764.5px;top:500px;width:44px;height:13px;background:#b9cbcb;"></div>
<div style="position:absolute;right:836.0px;top:501.69px;font-size:11px;line-height:11px;white-space:nowrap;text-align:right;letter-spacing:-0.25px;">2.500</div>
<div style="position:absolute;left:810.5px;top:500px;width:44px;height:13px;background:#b9cbcb;"></div>
<div style="position:absolute;right:790.0px;top:501.69px;font-size:11px;line-height:11px;white-space:nowrap;text-align:right;letter-spacing:-0.25px;">2.500</div>
<div style="position:absolute;left:534px;top:515px;width:45px;height:13px;background:#f4f4f4;border:1px solid #a9a9a9;box-shadow:inset 1px 1px 0 #fff;"></div>
<div style="position:absolute;right:1067px;top:517.19px;font-size:11px;line-height:11px;white-space:nowrap;text-align:right;letter-spacing:-0.2px;">4000.0</div>
<div style="position:absolute;left:580.5px;top:515px;width:44px;height:13px;background:#b9cbcb;"></div>
<div style="position:absolute;right:1020.0px;top:516.69px;font-size:11px;line-height:11px;white-space:nowrap;text-align:right;letter-spacing:-0.25px;">2.500</div>
<div style="position:absolute;left:626.5px;top:515px;width:44px;height:13px;background:#b9cbcb;"></div>
<div style="position:absolute;right:974.0px;top:516.69px;font-size:11px;line-height:11px;white-space:nowrap;text-align:right;letter-spacing:-0.25px;">2.500</div>
<div style="position:absolute;left:672.5px;top:515px;width:44px;height:13px;background:#b9cbcb;"></div>
<div style="position:absolute;right:928.0px;top:516.69px;font-size:11px;line-height:11px;white-space:nowrap;text-align:right;letter-spacing:-0.25px;">2.500</div>
<div style="position:absolute;left:718.5px;top:515px;width:44px;height:13px;background:#b9cbcb;"></div>
<div style="position:absolute;right:882.0px;top:516.69px;font-size:11px;line-height:11px;white-space:nowrap;text-align:right;letter-spacing:-0.25px;">2.500</div>
<div style="position:absolute;left:764.5px;top:515px;width:44px;height:13px;background:#b9cbcb;"></div>
<div style="position:absolute;right:836.0px;top:516.69px;font-size:11px;line-height:11px;white-space:nowrap;text-align:right;letter-spacing:-0.25px;">2.500</div>
<div style="position:absolute;left:810.5px;top:515px;width:44px;height:13px;background:#b9cbcb;"></div>
<div style="position:absolute;right:790.0px;top:516.69px;font-size:11px;line-height:11px;white-space:nowrap;text-align:right;letter-spacing:-0.25px;">2.500</div>
<div style="position:absolute;left:534px;top:530px;width:45px;height:13px;background:#f4f4f4;border:1px solid #a9a9a9;box-shadow:inset 1px 1px 0 #fff;"></div>
<div style="position:absolute;right:1067px;top:532.19px;font-size:11px;line-height:11px;white-space:nowrap;text-align:right;letter-spacing:-0.2px;">5000.0</div>
<div style="position:absolute;left:580.5px;top:530px;width:44px;height:13px;background:#b9cbcb;"></div>
<div style="position:absolute;right:1020.0px;top:531.69px;font-size:11px;line-height:11px;white-space:nowrap;text-align:right;letter-spacing:-0.25px;">2.500</div>
<div style="position:absolute;left:626.5px;top:530px;width:44px;height:13px;background:#b9cbcb;"></div>
<div style="position:absolute;right:974.0px;top:531.69px;font-size:11px;line-height:11px;white-space:nowrap;text-align:right;letter-spacing:-0.25px;">2.500</div>
<div style="position:absolute;left:672.5px;top:530px;width:44px;height:13px;background:#b9cbcb;"></div>
<div style="position:absolute;right:928.0px;top:531.69px;font-size:11px;line-height:11px;white-space:nowrap;text-align:right;letter-spacing:-0.25px;">2.500</div>
<div style="position:absolute;left:718.5px;top:530px;width:44px;height:13px;background:#b9cbcb;"></div>
<div style="position:absolute;right:882.0px;top:531.69px;font-size:11px;line-height:11px;white-space:nowrap;text-align:right;letter-spacing:-0.25px;">2.500</div>
<div style="position:absolute;left:764.5px;top:530px;width:44px;height:13px;background:#b9cbcb;"></div>
<div style="position:absolute;right:836.0px;top:531.69px;font-size:11px;line-height:11px;white-space:nowrap;text-align:right;letter-spacing:-0.25px;">2.500</div>
<div style="position:absolute;left:810.5px;top:530px;width:44px;height:13px;background:#b9cbcb;"></div>
<div style="position:absolute;right:790.0px;top:531.69px;font-size:11px;line-height:11px;white-space:nowrap;text-align:right;letter-spacing:-0.25px;">2.500</div>
<div style="position:absolute;left:534px;top:545px;width:45px;height:13px;background:#f4f4f4;border:1px solid #a9a9a9;box-shadow:inset 1px 1px 0 #fff;"></div>
<div style="position:absolute;right:1067px;top:547.19px;font-size:11px;line-height:11px;white-space:nowrap;text-align:right;letter-spacing:-0.2px;">6000.0</div>
<div style="position:absolute;left:580.5px;top:545px;width:44px;height:13px;background:#b9cbcb;"></div>
<div style="position:absolute;right:1020.0px;top:546.69px;font-size:11px;line-height:11px;white-space:nowrap;text-align:right;letter-spacing:-0.25px;">2.500</div>
<div style="position:absolute;left:626.5px;top:545px;width:44px;height:13px;background:#b9cbcb;"></div>
<div style="position:absolute;right:974.0px;top:546.69px;font-size:11px;line-height:11px;white-space:nowrap;text-align:right;letter-spacing:-0.25px;">2.500</div>
<div style="position:absolute;left:672.5px;top:545px;width:44px;height:13px;background:#b9cbcb;"></div>
<div style="position:absolute;right:928.0px;top:546.69px;font-size:11px;line-height:11px;white-space:nowrap;text-align:right;letter-spacing:-0.25px;">2.500</div>
<div style="position:absolute;left:718.5px;top:545px;width:44px;height:13px;background:#b9cbcb;"></div>
<div style="position:absolute;right:882.0px;top:546.69px;font-size:11px;line-height:11px;white-space:nowrap;text-align:right;letter-spacing:-0.25px;">2.500</div>
<div style="position:absolute;left:764.5px;top:545px;width:44px;height:13px;background:#b9cbcb;"></div>
<div style="position:absolute;right:836.0px;top:546.69px;font-size:11px;line-height:11px;white-space:nowrap;text-align:right;letter-spacing:-0.25px;">2.500</div>
<div style="position:absolute;left:810.5px;top:545px;width:44px;height:13px;background:#b9cbcb;"></div>
<div style="position:absolute;right:790.0px;top:546.69px;font-size:11px;line-height:11px;white-space:nowrap;text-align:right;letter-spacing:-0.25px;">2.500</div>
<div style="position:absolute;left:534px;top:560px;width:45px;height:13px;background:#f4f4f4;border:1px solid #a9a9a9;box-shadow:inset 1px 1px 0 #fff;"></div>
<div style="position:absolute;right:1067px;top:562.19px;font-size:11px;line-height:11px;white-space:nowrap;text-align:right;letter-spacing:-0.2px;">7000.0</div>
<div style="position:absolute;left:580.5px;top:560px;width:44px;height:13px;background:#b9cbcb;"></div>
<div style="position:absolute;right:1020.0px;top:561.69px;font-size:11px;line-height:11px;white-space:nowrap;text-align:right;letter-spacing:-0.25px;">2.500</div>
<div style="position:absolute;left:626.5px;top:560px;width:44px;height:13px;background:#b9cbcb;"></div>
<div style="position:absolute;right:974.0px;top:561.69px;font-size:11px;line-height:11px;white-space:nowrap;text-align:right;letter-spacing:-0.25px;">2.500</div>
<div style="position:absolute;left:672.5px;top:560px;width:44px;height:13px;background:#b9cbcb;"></div>
<div style="position:absolute;right:928.0px;top:561.69px;font-size:11px;line-height:11px;white-space:nowrap;text-align:right;letter-spacing:-0.25px;">2.500</div>
<div style="position:absolute;left:718.5px;top:560px;width:44px;height:13px;background:#b9cbcb;"></div>
<div style="position:absolute;right:882.0px;top:561.69px;font-size:11px;line-height:11px;white-space:nowrap;text-align:right;letter-spacing:-0.25px;">2.500</div>
<div style="position:absolute;left:764.5px;top:560px;width:44px;height:13px;background:#b9cbcb;"></div>
<div style="position:absolute;right:836.0px;top:561.69px;font-size:11px;line-height:11px;white-space:nowrap;text-align:right;letter-spacing:-0.25px;">2.500</div>
<div style="position:absolute;left:810.5px;top:560px;width:44px;height:13px;background:#b9cbcb;"></div>
<div style="position:absolute;right:790.0px;top:561.69px;font-size:11px;line-height:11px;white-space:nowrap;text-align:right;letter-spacing:-0.25px;">2.500</div>
<div style="position:absolute;left:534px;top:575px;width:45px;height:13px;background:#f4f4f4;border:1px solid #a9a9a9;box-shadow:inset 1px 1px 0 #fff;"></div>
<div style="position:absolute;right:1067px;top:577.19px;font-size:11px;line-height:11px;white-space:nowrap;text-align:right;letter-spacing:-0.2px;">8000.0</div>
<div style="position:absolute;left:580.5px;top:575px;width:44px;height:13px;background:#b9cbcb;"></div>
<div style="position:absolute;right:1020.0px;top:576.69px;font-size:11px;line-height:11px;white-space:nowrap;text-align:right;letter-spacing:-0.25px;">2.500</div>
<div style="position:absolute;left:626.5px;top:575px;width:44px;height:13px;background:#b9cbcb;"></div>
<div style="position:absolute;right:974.0px;top:576.69px;font-size:11px;line-height:11px;white-space:nowrap;text-align:right;letter-spacing:-0.25px;">2.500</div>
<div style="position:absolute;left:672.5px;top:575px;width:44px;height:13px;background:#b9cbcb;"></div>
<div style="position:absolute;right:928.0px;top:576.69px;font-size:11px;line-height:11px;white-space:nowrap;text-align:right;letter-spacing:-0.25px;">2.500</div>
<div style="position:absolute;left:718.5px;top:575px;width:44px;height:13px;background:#b9cbcb;"></div>
<div style="position:absolute;right:882.0px;top:576.69px;font-size:11px;line-height:11px;white-space:nowrap;text-align:right;letter-spacing:-0.25px;">2.500</div>
<div style="position:absolute;left:764.5px;top:575px;width:44px;height:13px;background:#b9cbcb;"></div>
<div style="position:absolute;right:836.0px;top:576.69px;font-size:11px;line-height:11px;white-space:nowrap;text-align:right;letter-spacing:-0.25px;">2.500</div>
<div style="position:absolute;left:810.5px;top:575px;width:44px;height:13px;background:#b9cbcb;"></div>
<div style="position:absolute;right:790.0px;top:576.69px;font-size:11px;line-height:11px;white-space:nowrap;text-align:right;letter-spacing:-0.25px;">2.500</div>
<div style="position:absolute;left:532px;top:596px;width:353px;height:1px;background:#fff;"></div>
<div style="position:absolute;left:606px;top:599px;width:1px;height:19px;background:#c8c8c8;"></div>
<div style="position:absolute;left:681px;top:599px;width:1px;height:19px;background:#c8c8c8;"></div>
<svg style="position:absolute;left:875px;top:611px" width="8" height="8"><rect x="6" y="0" width="2" height="2" fill="#b0b0b0"/><rect x="3" y="3" width="2" height="2" fill="#b0b0b0"/><rect x="6" y="3" width="2" height="2" fill="#b0b0b0"/><rect x="0" y="6" width="2" height="2" fill="#b0b0b0"/><rect x="3" y="6" width="2" height="2" fill="#b0b0b0"/><rect x="6" y="6" width="2" height="2" fill="#b0b0b0"/></svg>
<div style="position:absolute;left:905px;top:84px;width:689px;height:439px;box-shadow:2px 3px 9px 1px rgba(0,0,0,0.38);"></div>
<div style="position:absolute;left:905px;top:84px;width:689px;height:439px;background:#fff;border:1px solid #8a8a8a;border-right-color:#a0a0a0;border-bottom-color:#a0a0a0;"></div>
<svg style="position:absolute;left:913px;top:94px" width="16" height="12"><rect x="0" y="2.2" width="16" height="7.6" fill="#000"/><rect x="1.60" y="0.3" width="1.7" height="2.4" rx="0.6" fill="#000"/><rect x="1.60" y="9.3" width="1.7" height="2.4" rx="0.6" fill="#000"/><rect x="4.55" y="0.3" width="1.7" height="2.4" rx="0.6" fill="#000"/><rect x="4.55" y="9.3" width="1.7" height="2.4" rx="0.6" fill="#000"/><rect x="7.50" y="0.3" width="1.7" height="2.4" rx="0.6" fill="#000"/><rect x="7.50" y="9.3" width="1.7" height="2.4" rx="0.6" fill="#000"/><rect x="10.45" y="0.3" width="1.7" height="2.4" rx="0.6" fill="#000"/><rect x="10.45" y="9.3" width="1.7" height="2.4" rx="0.6" fill="#000"/><rect x="13.40" y="0.3" width="1.7" height="2.4" rx="0.6" fill="#000"/><rect x="13.40" y="9.3" width="1.7" height="2.4" rx="0.6" fill="#000"/></svg>
<div style="position:absolute;left:935px;top:94.84px;font-size:12px;line-height:12px;white-space:nowrap;color:#a3a3a3;">Compression ratio to prot against overspd of turbo Ethanol 1</div>
<svg style="position:absolute;left:1470px;top:90px" width="115" height="20"><g stroke="#999" stroke-width="1" fill="none" shape-rendering="crispEdges"><line x1="5" y1="9.5" x2="15" y2="9.5"/><rect x="50.5" y="4.5" width="9" height="9"/></g><g stroke="#999" stroke-width="1"><line x1="96" y1="4" x2="106" y2="14"/><line x1="106" y1="4" x2="96" y2="14"/></g></svg>
<div style="position:absolute;left:913px;top:119.98px;font-size:11.25px;line-height:11.25px;white-space:nowrap;letter-spacing:-0.1px;color:#6d6d6d;">Graph</div>
<div style="position:absolute;left:958.5px;top:119.98px;font-size:11.25px;line-height:11.25px;white-space:nowrap;letter-spacing:-0.1px;color:#6d6d6d;">View</div>
<div style="position:absolute;left:906px;top:133px;width:687px;height:27px;background:#f0f0f0;"></div>
<div style="position:absolute;left:907.5px;top:137px;width:2px;height:22px;border-left:1px solid #a0a0a0;border-right:1px solid #fff;"></div>
<div style="position:absolute;left:945.5px;top:137px;width:2px;height:22px;border-left:1px solid #a0a0a0;border-right:1px solid #fff;"></div>
<svg style="position:absolute;left:920px;top:142px" width="13" height="14"><path d="M1.5 1.5 L11.5 12.5 M11.5 1.5 L1.5 12.5" stroke="#ff0000" stroke-width="2.2"/></svg>
<div style="position:absolute;left:952px;top:137px;width:23px;height:22px;background:#cce4f7;border:1px solid #99c9ef;"></div>
<div style="position:absolute;left:998px;top:137px;width:23px;height:22px;background:#cce4f7;border:1px solid #99c9ef;"></div>
<div style="position:absolute;left:1044px;top:137px;width:23px;height:22px;background:#cce4f7;border:1px solid #99c9ef;"></div>
<svg style="position:absolute;left:955px;top:140px" width="17" height="17"><path d="M8.5 1 L16 8.5 L8.5 16 L1 8.5 Z" fill="#000"/><path d="M8.5 4.5 V12.5 M4.5 8.5 H12.5" stroke="#ff0000" stroke-width="1.4"/><rect x="5.5" y="5.5" width="6" height="6" fill="none" stroke="#ff0000" stroke-width="1"/></svg>
<svg style="position:absolute;left:977px;top:140px" width="18" height="17"><path d="M1.5 15 L5 8 L8 12 L12 6 L15 2" stroke="#ff0000" stroke-width="1.2" fill="none"/><g fill="none" stroke="#0000ff" stroke-width="1.2"><circle cx="4.5" cy="7.5" r="1.8"/><circle cx="7.5" cy="12.5" r="1.8"/><circle cx="12" cy="8" r="1.8"/><circle cx="15" cy="2.5" r="1.6"/><circle cx="15.5" cy="11" r="1.6"/></g></svg>
<svg style="position:absolute;left:1001px;top:140px" width="18" height="17"><path d="M1.5 2 V15.5 H17" stroke="#000" stroke-width="1" stroke-dasharray="1 1" fill="none"/><path d="M2 12 L6 8 L9 10 L12 5 L15 8" stroke="#0000ff" stroke-width="1.2" fill="none"/><path d="M2 14 L6 11 L9 12.5 L12 9 L16 7" stroke="#ff0000" stroke-width="1.4" fill="none"/></svg>
<svg style="position:absolute;left:1024px;top:141px" width="18" height="16"><path d="M1 14.5 H13 L17 8.5 H5 Z M3.5 11 H15 M5 8.5 L8 3.5 H17 L13.5 8.5 M7 6 H15.5 M9 3.5 L11 1 H17 L16 3.5" stroke="#000" stroke-width="1" fill="none"/></svg>
<svg style="position:absolute;left:1047px;top:140px" width="18" height="17"><path d="M1 4.5 H13 M1 7.5 H13 M1 10.5 H13 M1 13.5 H13" stroke-width="1.5" fill="none"/><path d="M1 4.5 H13" stroke="#ff0000" stroke-width="1.5"/><path d="M1 7.5 H13" stroke="#a0a0a0" stroke-width="1.5"/><path d="M1 10.5 H13" stroke="#00c000" stroke-width="1.5"/><path d="M1 13.5 H13" stroke="#0000ff" stroke-width="1.5"/><path d="M16 1 V16 M16 1 L12.5 5 M16 16 L12.5 12" stroke="#000" stroke-width="1.5" fill="none"/></svg>
<div style="position:absolute;left:906px;top:500px;width:687px;height:22px;background:#f0f0f0;border-top:1px solid #d6d6d6;"></div>
<div style="position:absolute;left:1035px;top:502px;width:1px;height:19px;background:#c8c8c8;"></div>
<div style="position:absolute;left:1165px;top:502px;width:1px;height:19px;background:#c8c8c8;"></div>
<div style="position:absolute;left:1295px;top:502px;width:1px;height:19px;background:#c8c8c8;"></div>
<svg style="position:absolute;left:1584px;top:513px" width="8" height="8"><rect x="6" y="0" width="2" height="2" fill="#b0b0b0"/><rect x="3" y="3" width="2" height="2" fill="#b0b0b0"/><rect x="6" y="3" width="2" height="2" fill="#b0b0b0"/><rect x="0" y="6" width="2" height="2" fill="#b0b0b0"/><rect x="3" y="6" width="2" height="2" fill="#b0b0b0"/><rect x="6" y="6" width="2" height="2" fill="#b0b0b0"/></svg>
<div style="position:absolute;left:1150.00px;width:200px;top:164.13px;font-size:9.3px;line-height:9.3px;white-space:nowrap;text-align:center;letter-spacing:0px;color:#b4b4b4;">TunerPro - Version 5.00</div>
<div style="position:absolute;left:1494px;top:172px;width:83px;height:20px;background:#ffff99;border:1px solid #000;"></div>
<div style="position:absolute;left:1497px;top:177.69px;font-size:11px;line-height:11px;white-space:nowrap;letter-spacing:-0.28px;">1 Point Selected</div>
<svg style="position:absolute;left:0;top:0" width="1643" height="812"><line x1="1111.2" y1="363.0" x2="1238.2" y2="291.9" stroke="#8a8a8a" stroke-width="1" stroke-dasharray="3 3" shape-rendering="crispEdges"/><line x1="1238.2" y1="291.9" x2="1388.5" y2="352.6" stroke="#8a8a8a" stroke-width="1" stroke-dasharray="3 3" shape-rendering="crispEdges"/><line x1="1111.2" y1="306.2" x2="1238.2" y2="235.1" stroke="#8a8a8a" stroke-width="1" stroke-dasharray="3 3" shape-rendering="crispEdges"/><line x1="1238.2" y1="235.1" x2="1388.5" y2="295.8" stroke="#8a8a8a" stroke-width="1" stroke-dasharray="3 3" shape-rendering="crispEdges"/><line x1="1132.4" y1="409.8" x2="1282.7" y2="470.4" stroke="#8a8a8a" stroke-width="1" stroke-dasharray="3 3" shape-rendering="crispEdges"/><line x1="1153.5" y1="397.9" x2="1303.8" y2="458.6" stroke="#8a8a8a" stroke-width="1" stroke-dasharray="3 3" shape-rendering="crispEdges"/><line x1="1174.7" y1="386.1" x2="1325.0" y2="446.8" stroke="#8a8a8a" stroke-width="1" stroke-dasharray="3 3" shape-rendering="crispEdges"/><line x1="1195.9" y1="374.2" x2="1346.2" y2="434.9" stroke="#8a8a8a" stroke-width="1" stroke-dasharray="3 3" shape-rendering="crispEdges"/><line x1="1217.0" y1="362.4" x2="1367.3" y2="423.1" stroke="#8a8a8a" stroke-width="1" stroke-dasharray="3 3" shape-rendering="crispEdges"/><line x1="1161.3" y1="441.8" x2="1288.3" y2="370.7" stroke="#8a8a8a" stroke-width="1" stroke-dasharray="3 3" shape-rendering="crispEdges"/><line x1="1194.7" y1="455.3" x2="1321.7" y2="384.2" stroke="#8a8a8a" stroke-width="1" stroke-dasharray="3 3" shape-rendering="crispEdges"/><line x1="1228.1" y1="468.8" x2="1355.1" y2="397.7" stroke="#8a8a8a" stroke-width="1" stroke-dasharray="3 3" shape-rendering="crispEdges"/><line x1="1111.2" y1="421.6" x2="1111.2" y2="249.4" stroke="#a0a0a0" stroke-width="1"/><line x1="1388.5" y1="411.2" x2="1388.5" y2="239.0" stroke="#a0a0a0" stroke-width="1"/><line x1="1111.2" y1="249.4" x2="1238.2" y2="178.3" stroke="#a0a0a0" stroke-width="1"/><line x1="1238.2" y1="178.3" x2="1388.5" y2="239.0" stroke="#a0a0a0" stroke-width="1"/><line x1="1261.5" y1="482.3" x2="1388.5" y2="411.2" stroke="#a0a0a0" stroke-width="1"/><line x1="1238.2" y1="350.5" x2="1388.5" y2="411.2" stroke="#a0a0a0" stroke-width="1"/><line x1="1111.2" y1="421.6" x2="1238.2" y2="350.5" stroke="#a0a0a0" stroke-width="1"/><g stroke="#000" stroke-width="1" shape-rendering="crispEdges"><polygon points="1217.0,190.2 1267.1,210.4 1288.3,198.5 1238.2,178.3" fill="#00f2a2"/><polygon points="1267.1,210.4 1283.8,217.1 1305.0,205.3 1288.3,198.5" fill="#00f2a2"/><polygon points="1283.8,217.1 1300.5,223.9 1321.7,212.0 1305.0,205.3" fill="#00f2a2"/><polygon points="1300.5,223.9 1333.9,237.4 1355.1,225.5 1321.7,212.0" fill="#00f2a2"/><polygon points="1333.9,237.4 1367.3,250.9 1388.5,239.0 1355.1,225.5" fill="#00f2a2"/><polygon points="1195.9,202.0 1246.0,222.2 1267.1,210.4 1217.0,190.2" fill="#00f2a2"/><polygon points="1246.0,222.2 1262.7,229.0 1283.8,217.1 1267.1,210.4" fill="#00f2a2"/><polygon points="1262.7,229.0 1279.4,235.7 1300.5,223.9 1283.8,217.1" fill="#00f2a2"/><polygon points="1279.4,235.7 1312.8,249.2 1333.9,237.4 1300.5,223.9" fill="#00f2a2"/><polygon points="1312.8,249.2 1346.2,262.7 1367.3,250.9 1333.9,237.4" fill="#00f2a2"/><polygon points="1174.7,213.9 1224.8,234.1 1246.0,222.2 1195.9,202.0" fill="#00f2a2"/><polygon points="1224.8,234.1 1241.5,240.8 1262.7,229.0 1246.0,222.2" fill="#00f2a2"/><polygon points="1241.5,240.8 1258.2,247.6 1279.4,235.7 1262.7,229.0" fill="#00f2a2"/><polygon points="1258.2,247.6 1291.6,261.1 1312.8,249.2 1279.4,235.7" fill="#00f2a2"/><polygon points="1291.6,261.1 1325.0,274.6 1346.2,262.7 1312.8,249.2" fill="#00f2a2"/><polygon points="1153.5,225.7 1203.6,245.9 1224.8,234.1 1174.7,213.9" fill="#00f2a2"/><polygon points="1203.6,245.9 1220.3,252.7 1241.5,240.8 1224.8,234.1" fill="#00f2a2"/><polygon points="1220.3,252.7 1237.0,259.4 1258.2,247.6 1241.5,240.8" fill="#00f2a2"/><polygon points="1237.0,259.4 1270.4,272.9 1291.6,261.1 1258.2,247.6" fill="#00f2a2"/><polygon points="1270.4,272.9 1303.8,286.4 1325.0,274.6 1291.6,261.1" fill="#00f2a2"/><polygon points="1143.0,231.6 1193.0,251.9 1203.6,245.9 1153.5,225.7" fill="#00f2a2"/><polygon points="1193.0,251.9 1209.8,258.6 1220.3,252.7 1203.6,245.9" fill="#00f2a2"/><polygon points="1209.8,258.6 1226.5,265.3 1237.0,259.4 1220.3,252.7" fill="#00f2a2"/><polygon points="1226.5,265.3 1259.9,278.8 1270.4,272.9 1237.0,259.4" fill="#00f2a2"/><polygon points="1259.9,278.8 1293.2,292.3 1303.8,286.4 1270.4,272.9" fill="#00f2a2"/><polygon points="1132.4,337.2 1182.5,357.5 1193.0,251.9 1143.0,231.6" fill="#00fac2"/><polygon points="1182.5,357.5 1199.2,364.2 1209.8,258.6 1193.0,251.9" fill="#00fac2"/><polygon points="1199.2,364.2 1215.9,371.0 1226.5,265.3 1209.8,258.6" fill="#00fac2"/><polygon points="1215.9,371.0 1249.3,384.5 1259.9,278.8 1226.5,265.3" fill="#00fac2"/><polygon points="1249.3,384.5 1282.7,397.9 1293.2,292.3 1259.9,278.8" fill="#00fac2"/><polygon points="1111.2,421.6 1161.3,441.8 1182.5,357.5 1132.4,337.2" fill="#00ffff"/><polygon points="1161.3,441.8 1178.0,448.6 1199.2,364.2 1182.5,357.5" fill="#00ffff"/><polygon points="1178.0,448.6 1194.7,455.3 1215.9,371.0 1199.2,364.2" fill="#00ffff"/><polygon points="1194.7,455.3 1228.1,468.8 1249.3,384.5 1215.9,371.0" fill="#00ffff"/><polygon points="1228.1,468.8 1261.5,482.3 1282.7,397.9 1249.3,384.5" fill="#00ffff"/></g><circle cx="1111.2" cy="421.6" r="5.2" fill="#0000ff" stroke="#000" stroke-width="1.6"/></svg>
<div style="position:absolute;left:1000.00px;width:500px;top:176.43px;font-size:15.2px;line-height:15.2px;white-space:nowrap;text-align:center;letter-spacing:-0.22px;font-weight:bold;">Compression ratio to prot against overspd of turbo Ethanol 1</div>
<div style="position:absolute;right:535.3px;top:247.10px;font-size:9.8px;line-height:9.8px;white-space:nowrap;text-align:right;letter-spacing:-0.45px;color:#0000ff;">2.75</div>
<div style="position:absolute;left:1391.0px;top:236.70px;font-size:9.8px;line-height:9.8px;white-space:nowrap;letter-spacing:-0.45px;color:#0000ff;">2.75</div>
<div style="position:absolute;right:535.3px;top:303.90px;font-size:9.8px;line-height:9.8px;white-space:nowrap;text-align:right;letter-spacing:-0.45px;color:#0000ff;">2.43</div>
<div style="position:absolute;left:1391.0px;top:293.50px;font-size:9.8px;line-height:9.8px;white-space:nowrap;letter-spacing:-0.45px;color:#0000ff;">2.43</div>
<div style="position:absolute;right:535.3px;top:360.70px;font-size:9.8px;line-height:9.8px;white-space:nowrap;text-align:right;letter-spacing:-0.45px;color:#0000ff;">2.12</div>
<div style="position:absolute;left:1391.0px;top:350.30px;font-size:9.8px;line-height:9.8px;white-space:nowrap;letter-spacing:-0.45px;color:#0000ff;">2.12</div>
<div style="position:absolute;right:535.3px;top:419.30px;font-size:9.8px;line-height:9.8px;white-space:nowrap;text-align:right;letter-spacing:-0.5px;color:#262626;">550.00</div>
<div style="position:absolute;right:485.20000000000005px;top:439.54px;font-size:9.8px;line-height:9.8px;white-space:nowrap;text-align:right;letter-spacing:-0.5px;color:#262626;">700.00</div>
<div style="position:absolute;right:451.79999999999995px;top:453.03px;font-size:9.8px;line-height:9.8px;white-space:nowrap;text-align:right;letter-spacing:-0.5px;color:#262626;">800.00</div>
<div style="position:absolute;right:418.39999999999986px;top:466.52px;font-size:9.8px;line-height:9.8px;white-space:nowrap;text-align:right;letter-spacing:-0.5px;color:#262626;">900.00</div>
<div style="position:absolute;right:385.0px;top:480.00px;font-size:9.8px;line-height:9.8px;white-space:nowrap;text-align:right;letter-spacing:-0.5px;color:#262626;">1000.00</div>
<div style="position:absolute;left:1264.2px;top:480.00px;font-size:9.8px;line-height:9.8px;white-space:nowrap;letter-spacing:-0.5px;color:#ff0000;">2000.0</div>
<div style="position:absolute;left:1285.3666666666668px;top:468.15px;font-size:9.8px;line-height:9.8px;white-space:nowrap;letter-spacing:-0.5px;color:#ff0000;">3000.0</div>
<div style="position:absolute;left:1306.5333333333333px;top:456.30px;font-size:9.8px;line-height:9.8px;white-space:nowrap;letter-spacing:-0.5px;color:#ff0000;">4000.0</div>
<div style="position:absolute;left:1327.7px;top:444.45px;font-size:9.8px;line-height:9.8px;white-space:nowrap;letter-spacing:-0.5px;color:#ff0000;">5000.0</div>
<div style="position:absolute;left:1348.8666666666668px;top:432.60px;font-size:9.8px;line-height:9.8px;white-space:nowrap;letter-spacing:-0.5px;color:#ff0000;">6000.0</div>
<div style="position:absolute;left:1370.0333333333333px;top:420.75px;font-size:9.8px;line-height:9.8px;white-space:nowrap;letter-spacing:-0.5px;color:#ff0000;">7000.0</div>
<div style="position:absolute;left:1391.2px;top:408.90px;font-size:9.8px;line-height:9.8px;white-space:nowrap;letter-spacing:-0.5px;color:#ff0000;">8000.0</div>
<svg style="position:absolute;left:1047px;top:332px" width="3" height="10" shape-rendering="crispEdges"><path d="M1.5 0 V3 M1.5 5 V8" stroke="#0000ff" stroke-width="1"/></svg>
<svg style="position:absolute;left:1444px;top:321px" width="3" height="10" shape-rendering="crispEdges"><path d="M1.5 0 V3 M1.5 5 V8" stroke="#0000ff" stroke-width="1"/></svg>
<div style="position:absolute;left:905px;top:532px;width:211px;height:167px;background:linear-gradient(#bccbdc 0px,#cfdceb 22px,#d7e4f2 30px,#d7e4f2 100%);border:1px solid #4a4a4a;border-radius:6px 6px 0 0;box-shadow:inset 1px 1px 0 rgba(255,255,255,0.85),inset -1px -1px 0 rgba(255,255,255,0.6);"></div>
<svg style="position:absolute;left:915px;top:545px" width="16" height="12"><rect x="0" y="2.2" width="16" height="7.6" fill="#000"/><rect x="1.60" y="0.3" width="1.7" height="2.4" rx="0.6" fill="#000"/><rect x="1.60" y="9.3" width="1.7" height="2.4" rx="0.6" fill="#000"/><rect x="4.55" y="0.3" width="1.7" height="2.4" rx="0.6" fill="#000"/><rect x="4.55" y="9.3" width="1.7" height="2.4" rx="0.6" fill="#000"/><rect x="7.50" y="0.3" width="1.7" height="2.4" rx="0.6" fill="#000"/><rect x="7.50" y="9.3" width="1.7" height="2.4" rx="0.6" fill="#000"/><rect x="10.45" y="0.3" width="1.7" height="2.4" rx="0.6" fill="#000"/><rect x="10.45" y="9.3" width="1.7" height="2.4" rx="0.6" fill="#000"/><rect x="13.40" y="0.3" width="1.7" height="2.4" rx="0.6" fill="#000"/><rect x="13.40" y="9.3" width="1.7" height="2.4" rx="0.6" fill="#000"/></svg>
<div style="position:absolute;left:936px;top:546.84px;font-size:12px;line-height:12px;white-space:nowrap;letter-spacing:-0.15px;color:#a09e9e;">Conv rel fuel mass rk to ...</div>
<div style="position:absolute;left:1074px;top:542px;width:32px;height:18px;background:linear-gradient(#d3dde9,#c2cfdf);border:1px solid #8491a6;border-radius:3px;box-shadow:inset 0 0 0 1px rgba(255,255,255,0.75);"><svg width="30" height="16" style="position:absolute;left:0;top:0"><path d="M11.3 5.3 L18.7 10.7 M18.7 5.3 L11.3 10.7" stroke="#3f4650" stroke-width="4.4" stroke-linecap="round"/><path d="M11.3 5.3 L18.7 10.7 M18.7 5.3 L11.3 10.7" stroke="#fff" stroke-width="2.2" stroke-linecap="round"/></svg></div>
<div style="position:absolute;left:913px;top:563px;width:195px;height:127px;background:#f0f0f0;"></div>
<div style="position:absolute;left:919px;top:570px;width:185px;height:32px;background:#f0f0f0;border-top:1px solid #a0a0a0;border-left:1px solid #a0a0a0;border-bottom:1px solid #fff;border-right:1px solid #fff;overflow:hidden;"><div style="position:absolute;left:-2px;top:0.5px;width:189px;text-align:center;font-size:11.25px;line-height:13.3px;letter-spacing:-0.3px;white-space:nowrap;">Conv rel fuel mass rk to effective inj<br>time te or intake man inj PFI Ethanol 1</div></div>
<div style="position:absolute;left:930px;top:612px;width:160px;height:4px;background:#e7eaea;border:1px solid #d6d6d6;"></div>
<div style="position:absolute;left:944px;top:609px;width:5px;height:10px;background:#0078d7;"></div>
<div style="position:absolute;left:918px;top:630px;width:71px;height:20px;background:#fff;border:1px solid #7a7a7a;"></div>
<div style="position:absolute;left:923.5px;top:635.48px;font-size:11.25px;line-height:11.25px;white-space:nowrap;letter-spacing:0px;">0.0596</div>
<div style="position:absolute;left:995.5px;top:638.48px;font-size:11.25px;line-height:11.25px;white-space:nowrap;letter-spacing:-0.1px;">ms/%</div>
<div style="position:absolute;left:917.5px;top:653.98px;font-size:11.25px;line-height:11.25px;white-space:nowrap;letter-spacing:-0.45px;">No Compare Bin</div>
<div style="position:absolute;left:1055px;top:650px;width:48px;height:16px;background:#e1e1e1;border:2px solid #0078d7;"></div>
<div style="position:absolute;left:1054.00px;width:50px;top:653.98px;font-size:11.25px;line-height:11.25px;white-space:nowrap;text-align:center;letter-spacing:-0.1px;">Save</div>
<div style="position:absolute;left:918px;top:667.5px;width:71px;height:19px;background:#f0f0f0;border:1px solid #7a7a7a;"></div>
<div style="position:absolute;left:923.5px;top:671.98px;font-size:11.25px;line-height:11.25px;white-space:nowrap;letter-spacing:-0.1px;">None</div>
<div style="position:absolute;left:992px;top:670px;width:36px;height:16px;background:#e1e1e1;border:1px solid #adadad;"></div>
<div style="position:absolute;left:985.00px;width:50px;top:673.98px;font-size:11.25px;line-height:11.25px;white-space:nowrap;text-align:center;letter-spacing:-0.1px;">Copy</div>
<div style="position:absolute;left:1055px;top:670px;width:48px;height:16px;background:#e1e1e1;border:1px solid #adadad;"></div>
<div style="position:absolute;left:1049.00px;width:60px;top:673.98px;font-size:11.25px;line-height:11.25px;white-space:nowrap;text-align:center;letter-spacing:-0.1px;">Cancel</div>
<div style="position:absolute;left:1125px;top:532px;width:211px;height:167px;background:linear-gradient(#97b1cf 0px,#a9c3df 18px,#b9d1ea 30px,#b9d1ea 100%);border:1px solid #111;border-radius:6px 6px 0 0;box-shadow:inset 1px 1px 0 rgba(255,255,255,0.9),inset -1px -1px 0 #28c8ee;"></div>
<svg style="position:absolute;left:1135px;top:545px" width="16" height="12"><rect x="0" y="2.2" width="16" height="7.6" fill="#000"/><rect x="1.60" y="0.3" width="1.7" height="2.4" rx="0.6" fill="#000"/><rect x="1.60" y="9.3" width="1.7" height="2.4" rx="0.6" fill="#000"/><rect x="4.55" y="0.3" width="1.7" height="2.4" rx="0.6" fill="#000"/><rect x="4.55" y="9.3" width="1.7" height="2.4" rx="0.6" fill="#000"/><rect x="7.50" y="0.3" width="1.7" height="2.4" rx="0.6" fill="#000"/><rect x="7.50" y="9.3" width="1.7" height="2.4" rx="0.6" fill="#000"/><rect x="10.45" y="0.3" width="1.7" height="2.4" rx="0.6" fill="#000"/><rect x="10.45" y="9.3" width="1.7" height="2.4" rx="0.6" fill="#000"/><rect x="13.40" y="0.3" width="1.7" height="2.4" rx="0.6" fill="#000"/><rect x="13.40" y="9.3" width="1.7" height="2.4" rx="0.6" fill="#000"/></svg>
<div style="position:absolute;left:1156px;top:546.84px;font-size:12px;line-height:12px;white-space:nowrap;letter-spacing:-0.15px;color:#000;">Conv rel fuel mass rk to ...</div>
<div style="position:absolute;left:1294px;top:542px;width:32px;height:18px;background:linear-gradient(#eab2a6 0%,#dc8c7c 45%,#c0412a 50%,#c24a33 70%,#d9826e 100%);border:1px solid #4b1616;border-radius:3px;box-shadow:inset 0 0 0 1px rgba(255,255,255,0.45);"><svg width="30" height="16" style="position:absolute;left:0;top:0"><path d="M11.3 5.3 L18.7 10.7 M18.7 5.3 L11.3 10.7" stroke="#4a2a2a" stroke-width="4.4" stroke-linecap="round"/><path d="M11.3 5.3 L18.7 10.7 M18.7 5.3 L11.3 10.7" stroke="#fff" stroke-width="2.2" stroke-linecap="round"/></svg></div>
<div style="position:absolute;left:1133px;top:563px;width:195px;height:127px;background:#f0f0f0;"></div>
<div style="position:absolute;left:1139px;top:570px;width:185px;height:32px;background:#f0f0f0;border-top:1px solid #a0a0a0;border-left:1px solid #a0a0a0;border-bottom:1px solid #fff;border-right:1px solid #fff;overflow:hidden;"><div style="position:absolute;left:-2px;top:0.5px;width:189px;text-align:center;font-size:11.25px;line-height:13.3px;letter-spacing:-0.3px;white-space:nowrap;">Conv rel fuel mass rk to effective inj<br>time te or intake man inj PFI Gasoline<br>1</div></div>
<div style="position:absolute;left:1150px;top:612px;width:160px;height:4px;background:#e7eaea;border:1px solid #d6d6d6;"></div>
<div style="position:absolute;left:1159px;top:609px;width:5px;height:10px;background:#0078d7;"></div>
<div style="position:absolute;left:1138px;top:630px;width:71px;height:20px;background:#fff;border:1px solid #7a7a7a;"></div>
<div style="position:absolute;left:1143.5px;top:635.48px;font-size:11.25px;line-height:11.25px;white-space:nowrap;letter-spacing:0px;">0.0389</div>
<div style="position:absolute;left:1215.5px;top:638.48px;font-size:11.25px;line-height:11.25px;white-space:nowrap;letter-spacing:-0.1px;">ms/%</div>
<div style="position:absolute;left:1137.5px;top:653.98px;font-size:11.25px;line-height:11.25px;white-space:nowrap;letter-spacing:-0.45px;">No Compare Bin</div>
<div style="position:absolute;left:1275px;top:650px;width:48px;height:16px;background:#e1e1e1;border:2px solid #0078d7;"></div>
<div style="position:absolute;left:1274.00px;width:50px;top:653.98px;font-size:11.25px;line-height:11.25px;white-space:nowrap;text-align:center;letter-spacing:-0.1px;">Save</div>
<div style="position:absolute;left:1138px;top:667.5px;width:71px;height:19px;background:#f0f0f0;border:1px solid #7a7a7a;"></div>
<div style="position:absolute;left:1143.5px;top:671.98px;font-size:11.25px;line-height:11.25px;white-space:nowrap;letter-spacing:-0.1px;">None</div>
<div style="position:absolute;left:1212px;top:670px;width:36px;height:16px;background:#e1e1e1;border:1px solid #adadad;"></div>
<div style="position:absolute;left:1205.00px;width:50px;top:673.98px;font-size:11.25px;line-height:11.25px;white-space:nowrap;text-align:center;letter-spacing:-0.1px;">Copy</div>
<div style="position:absolute;left:1275px;top:670px;width:48px;height:16px;background:#e1e1e1;border:1px solid #adadad;"></div>
<div style="position:absolute;left:1269.00px;width:60px;top:673.98px;font-size:11.25px;line-height:11.25px;white-space:nowrap;text-align:center;letter-spacing:-0.1px;">Cancel</div>
<div style="position:absolute;left:1341px;top:532px;width:211px;height:167px;background:linear-gradient(#bccbdc 0px,#cfdceb 22px,#d7e4f2 30px,#d7e4f2 100%);border:1px solid #4a4a4a;border-radius:6px 6px 0 0;box-shadow:inset 1px 1px 0 rgba(255,255,255,0.85),inset -1px -1px 0 rgba(255,255,255,0.6);"></div>
<svg style="position:absolute;left:1351px;top:545px" width="16" height="12"><rect x="0" y="2.2" width="16" height="7.6" fill="#000"/><rect x="1.60" y="0.3" width="1.7" height="2.4" rx="0.6" fill="#000"/><rect x="1.60" y="9.3" width="1.7" height="2.4" rx="0.6" fill="#000"/><rect x="4.55" y="0.3" width="1.7" height="2.4" rx="0.6" fill="#000"/><rect x="4.55" y="9.3" width="1.7" height="2.4" rx="0.6" fill="#000"/><rect x="7.50" y="0.3" width="1.7" height="2.4" rx="0.6" fill="#000"/><rect x="7.50" y="9.3" width="1.7" height="2.4" rx="0.6" fill="#000"/><rect x="10.45" y="0.3" width="1.7" height="2.4" rx="0.6" fill="#000"/><rect x="10.45" y="9.3" width="1.7" height="2.4" rx="0.6" fill="#000"/><rect x="13.40" y="0.3" width="1.7" height="2.4" rx="0.6" fill="#000"/><rect x="13.40" y="9.3" width="1.7" height="2.4" rx="0.6" fill="#000"/></svg>
<div style="position:absolute;left:1372px;top:546.84px;font-size:12px;line-height:12px;white-space:nowrap;letter-spacing:-0.15px;color:#a09e9e;">Conv rel fuel mass rk int...</div>
<div style="position:absolute;left:1510px;top:542px;width:32px;height:18px;background:linear-gradient(#d3dde9,#c2cfdf);border:1px solid #8491a6;border-radius:3px;box-shadow:inset 0 0 0 1px rgba(255,255,255,0.75);"><svg width="30" height="16" style="position:absolute;left:0;top:0"><path d="M11.3 5.3 L18.7 10.7 M18.7 5.3 L11.3 10.7" stroke="#3f4650" stroke-width="4.4" stroke-linecap="round"/><path d="M11.3 5.3 L18.7 10.7 M18.7 5.3 L11.3 10.7" stroke="#fff" stroke-width="2.2" stroke-linecap="round"/></svg></div>
<div style="position:absolute;left:1349px;top:563px;width:195px;height:127px;background:#f0f0f0;"></div>
<div style="position:absolute;left:1355px;top:570px;width:185px;height:32px;background:#f0f0f0;border-top:1px solid #a0a0a0;border-left:1px solid #a0a0a0;border-bottom:1px solid #fff;border-right:1px solid #fff;overflow:hidden;"><div style="position:absolute;left:-2px;top:0.5px;width:189px;text-align:center;font-size:11.25px;line-height:13.3px;letter-spacing:-0.3px;white-space:nowrap;">Conv rel fuel mass rk into effective inj<br>time te Gasoline 1</div></div>
<div style="position:absolute;left:1366px;top:612px;width:160px;height:4px;background:#e7eaea;border:1px solid #d6d6d6;"></div>
<div style="position:absolute;left:1373px;top:609px;width:5px;height:10px;background:#0078d7;"></div>
<div style="position:absolute;left:1354px;top:630px;width:71px;height:20px;background:#fff;border:1px solid #7a7a7a;"></div>
<div style="position:absolute;left:1359.5px;top:635.48px;font-size:11.25px;line-height:11.25px;white-space:nowrap;letter-spacing:0px;">0.0320</div>
<div style="position:absolute;left:1431.5px;top:638.48px;font-size:11.25px;line-height:11.25px;white-space:nowrap;letter-spacing:-0.1px;">ms/%</div>
<div style="position:absolute;left:1353.5px;top:653.98px;font-size:11.25px;line-height:11.25px;white-space:nowrap;letter-spacing:-0.45px;">No Compare Bin</div>
<div style="position:absolute;left:1491px;top:650px;width:48px;height:16px;background:#e1e1e1;border:2px solid #0078d7;"></div>
<div style="position:absolute;left:1490.00px;width:50px;top:653.98px;font-size:11.25px;line-height:11.25px;white-space:nowrap;text-align:center;letter-spacing:-0.1px;">Save</div>
<div style="position:absolute;left:1354px;top:667.5px;width:71px;height:19px;background:#f0f0f0;border:1px solid #7a7a7a;"></div>
<div style="position:absolute;left:1359.5px;top:671.98px;font-size:11.25px;line-height:11.25px;white-space:nowrap;letter-spacing:-0.1px;">None</div>
<div style="position:absolute;left:1428px;top:670px;width:36px;height:16px;background:#e1e1e1;border:1px solid #adadad;"></div>
<div style="position:absolute;left:1421.00px;width:50px;top:673.98px;font-size:11.25px;line-height:11.25px;white-space:nowrap;text-align:center;letter-spacing:-0.1px;">Copy</div>
<div style="position:absolute;left:1491px;top:670px;width:48px;height:16px;background:#e1e1e1;border:1px solid #adadad;"></div>
<div style="position:absolute;left:1485.00px;width:60px;top:673.98px;font-size:11.25px;line-height:11.25px;white-space:nowrap;text-align:center;letter-spacing:-0.1px;">Cancel</div>
<div style="position:absolute;left:8.5px;top:57px;width:2px;height:21px;border-left:1px solid #a0a0a0;border-right:1px solid #fff;"></div>
<div style="position:absolute;left:85px;top:58px;width:2px;height:20px;border-left:1px solid #a0a0a0;border-right:1px solid #fff;"></div>
<div style="position:absolute;left:168px;top:58px;width:2px;height:20px;border-left:1px solid #a0a0a0;border-right:1px solid #fff;"></div>
<div style="position:absolute;left:291px;top:58px;width:2px;height:20px;border-left:1px solid #a0a0a0;border-right:1px solid #fff;"></div>
<div style="position:absolute;left:391px;top:58px;width:2px;height:20px;border-left:1px solid #a0a0a0;border-right:1px solid #fff;"></div>
<div style="position:absolute;left:242px;top:57px;width:23px;height:21px;background:#d9e7f3;border:1px solid #c2dcf2;"></div>
<div style="position:absolute;left:296px;top:57px;width:23px;height:21px;background:#d9e7f3;border:1px solid #c2dcf2;"></div>
<div style="position:absolute;left:397px;top:57px;width:23px;height:21px;background:#d9e7f3;border:1px solid #c2dcf2;"></div>
<svg style="position:absolute;left:17px;top:60px" width="17" height="16" viewBox="0 0 17 16"><path d="M1 4.5 H6 L7.5 6 H13.5 V14.5 H1 Z" fill="#f2cf7e" stroke="#c58a3c" stroke-width="1"/><path d="M1.5 14.5 L4 8.5 H16 L13.5 14.5 Z" fill="#fbe3a4" stroke="#c58a3c" stroke-width="1"/><path d="M7 4 Q10 0 14 2.5" stroke="#3aa33a" stroke-width="1.8" fill="none"/><path d="M12.5 0.5 L16 3 L12 5 Z" fill="#3aa33a"/></svg>
<svg style="position:absolute;left:41px;top:61px" width="15" height="15" viewBox="0 0 15 15"><rect x="0.5" y="0.5" width="14" height="14" rx="1.5" fill="#7d7dcc" stroke="#5656a6"/><rect x="3" y="1" width="9" height="6" fill="#f4f4ff"/><path d="M4.5 3 H10.5 M4.5 5 H10.5" stroke="#9a9ad0" stroke-width="0.8"/><rect x="4" y="10" width="7" height="4.5" fill="#e8e8f4"/><rect x="5.5" y="11" width="2" height="2.5" fill="#5656a6"/></svg>
<svg style="position:absolute;left:63px;top:60px" width="17" height="16" viewBox="0 0 17 16"><path d="M1 5.5 H6 L7.5 7 H14.5 V14.5 H1 Z" fill="#f7d991" stroke="#c58a3c" stroke-width="1"/><path d="M1 8.5 H14.5" stroke="#e9c16a"/><path d="M13 6 Q13 2 9 2" stroke="#4a6ad0" stroke-width="1.6" fill="none"/><path d="M10 0 L7 2 L10 4.5 Z" fill="#4a6ad0"/></svg>
<svg style="position:absolute;left:95px;top:61px" width="15" height="15" viewBox="0 0 15 15"><path d="M7 3 L13.5 0.5 V12.5 L7 14.5 Z" fill="#3d85d8"/><path d="M4 2.5 H9 V13 H4 Z" fill="#e8f0f8" stroke="#9ab" stroke-width="0.7"/><path d="M7 3 L13.5 0.5 V12.5 L7 14.5 Z" fill="#2f78cf"/><circle cx="3.5" cy="10.5" r="3" fill="#f5a623" stroke="#e8891a"/><circle cx="3.5" cy="10.5" r="1.2" fill="#fff"/></svg>
<svg style="position:absolute;left:117px;top:61px" width="16" height="15" viewBox="0 0 16 15"><path d="M5 6 L10 1 L15 6 L12 9 L14 12 L10 14 L5 9 Z" fill="#fafafa" stroke="#d8d8d8" stroke-width="0.8"/><circle cx="4" cy="11" r="3.5" fill="#2ea82e"/><path d="M4 9 V13 M2 11 H6" stroke="#fff" stroke-width="1.3"/></svg>
<svg style="position:absolute;left:142px;top:60px" width="13" height="16" viewBox="0 0 13 16"><path d="M0.5 0.5 H8 L12.5 5 V15.5 H0.5 Z" fill="#f6f8fc" stroke="#a8a8a8"/><path d="M8 0.5 V5 H12.5" fill="#e8e8e8" stroke="#a8a8a8"/></svg>
<svg style="position:absolute;left:176px;top:60px" width="16" height="16" viewBox="0 0 16 16"><path d="M2.5 2.5 L13.5 13.5 M13.5 2.5 L2.5 13.5" stroke="#d9434b" stroke-width="3.6" stroke-linecap="square"/></svg>
<svg style="position:absolute;left:199px;top:60px" width="17" height="17" viewBox="0 0 17 17"><circle cx="8.5" cy="8.5" r="7.6" fill="#2fa82f" stroke="#1c7f1c" stroke-width="1"/><circle cx="8.5" cy="6.5" r="5" fill="#5fcf5f" opacity="0.5"/><path d="M8.5 4 V13 M4 8.5 H13" stroke="#fff" stroke-width="2.4"/></svg>
<svg style="position:absolute;left:222px;top:60px" width="16" height="16" viewBox="0 0 16 16"><rect x="0.5" y="0.5" width="9" height="11" fill="#eee" stroke="#999"/><rect x="5.5" y="4.5" width="10" height="11" fill="#e4e4e4" stroke="#999"/><circle cx="7.5" cy="8.5" r="4" fill="#2fa82f"/><path d="M7.5 6 V11 M5 8.5 H10" stroke="#fff" stroke-width="1.4"/></svg>
<svg style="position:absolute;left:245px;top:60px" width="17" height="17" viewBox="0 0 17 17"><path d="M3 14 L10 7" stroke="#9a9a9a" stroke-width="3.4" stroke-linecap="round"/><circle cx="12" cy="5" r="3.6" fill="#9a9a9a"/><path d="M11.5 1 L13 4.5 L16.5 5" stroke="#d9e7f3" stroke-width="2"/><circle cx="3" cy="14" r="2.4" fill="#9a9a9a"/><circle cx="3" cy="14" r="0.9" fill="#d9e7f3"/></svg>
<svg style="position:absolute;left:270px;top:60px" width="13" height="16" viewBox="0 0 13 16"><path d="M0.5 0.5 H8 L12.5 5 V15.5 H0.5 Z" fill="#f6f8fc" stroke="#a8a8a8"/><path d="M8 0.5 V5 H12.5" fill="#e8e8e8" stroke="#a8a8a8"/></svg>
<svg style="position:absolute;left:299px;top:60px" width="17" height="16" viewBox="0 0 17 16"><rect x="0.75" y="0.75" width="15.5" height="14.5" fill="#fff" stroke="#3f7fce" stroke-width="1.5"/><rect x="0.5" y="0.5" width="16" height="3" fill="#3f7fce"/><rect x="7.5" y="5.5" width="6.5" height="7" fill="none" stroke="#3f7fce"/><path d="M2.5 6 H5 M2.5 8.5 H5 M2.5 11 H5" stroke="#3f7fce"/></svg>
<svg style="position:absolute;left:322px;top:60px" width="17" height="16" viewBox="0 0 17 16"><rect x="0.75" y="0.75" width="15.5" height="14.5" fill="#fff" stroke="#3f7fce" stroke-width="1.5"/><rect x="0.5" y="0.5" width="16" height="2.5" fill="#3f7fce"/><path d="M1 7.5 H16" stroke="#3f7fce" stroke-width="2"/></svg>
<svg style="position:absolute;left:345px;top:61px" width="17" height="16" viewBox="0 0 17 16"><rect x="0.5" y="0.5" width="15" height="13" fill="#f4f4fa" stroke="#999"/><rect x="0.5" y="0.5" width="15" height="3" fill="#9b59d0"/><circle cx="11.5" cy="11" r="4.5" fill="#2a6ed8"/><rect x="10.8" y="9.5" width="1.5" height="4" fill="#fff"/><rect x="10.8" y="7.5" width="1.5" height="1.3" fill="#fff"/></svg>
<svg style="position:absolute;left:368px;top:61px" width="16" height="15" viewBox="0 0 16 15"><rect x="0" y="0" width="16" height="10.5" fill="#a0a0a0"/><rect x="6" y="10.5" width="4" height="2.5" fill="#a0a0a0"/><rect x="3.5" y="12.5" width="9" height="2" fill="#a0a0a0"/></svg>
<svg style="position:absolute;left:400px;top:59px" width="17" height="17" viewBox="0 0 17 17"><defs><pattern id="ydot" width="2" height="2" patternUnits="userSpaceOnUse"><rect width="2" height="2" fill="#ffff00"/><rect width="1" height="1" fill="#e8e8b0"/></pattern></defs><path d="M1 1 H12 L15 4 V16 H1 Z" fill="url(#ydot)"/><text x="8" y="7.5" font-family="Liberation Serif" font-weight="bold" font-size="8" fill="#107878" text-anchor="middle">101</text><text x="8" y="15.5" font-family="Liberation Serif" font-weight="bold" font-size="8" fill="#107878" text-anchor="middle">011</text></svg>
<svg style="position:absolute;left:423px;top:60px" width="16" height="16" viewBox="0 0 16 16"><circle cx="6.5" cy="6.5" r="5.2" fill="#dff1fb" stroke="#7a8a94" stroke-width="1.4"/><path d="M10.5 10.5 L15 15" stroke="#7a7a7a" stroke-width="2.4"/></svg>
<svg style="position:absolute;left:446px;top:60px" width="17" height="16" viewBox="0 0 17 16"><path d="M8.5 1 V14 M4 15 H13 M1.5 3.5 H15.5" stroke="#000" stroke-width="1.4" fill="none"/><path d="M2.5 3.5 L0.5 9 M2.5 3.5 L4.5 9 M14.5 3.5 L12.5 9 M14.5 3.5 L16.5 9" stroke="#000" stroke-width="0.7"/><path d="M0.3 9 Q2.5 12 4.7 9 Z M12.3 9 Q14.5 12 16.7 9 Z" fill="#ffff30" stroke="#000" stroke-width="0.8"/></svg>
<svg style="position:absolute;left:469px;top:60px" width="17" height="16" viewBox="0 0 17 16"><rect x="3.5" y="0.5" width="10" height="5" fill="#6a9ef0" stroke="#3d6fc0"/><path d="M8.5 5.5 V8 M3.5 8 H13.5 M3.5 8 V9.5 M13.5 8 V9.5" stroke="#666"/><rect x="0.5" y="9.5" width="6" height="6" fill="#7ee07e" stroke="#3a9a3a"/><rect x="10.5" y="9.5" width="6" height="6" fill="#f07878" stroke="#c03a3a"/></svg>
<svg style="position:absolute;left:493px;top:60px" width="15" height="16" viewBox="0 0 15 16"><rect x="0.5" y="0.5" width="14" height="15" fill="#f4f4f4" stroke="#777"/><rect x="2" y="2" width="11" height="3" fill="#2f8f3f"/><path d="M2.5 7 H7 M9 7 H12.5" stroke="#f08a2a" stroke-width="1"/><path d="M2.5 9.5 H5 M7 9.5 H9 M10.5 9.5 H12.5 M2.5 12 H5 M7 12 H9" stroke="#888" stroke-width="1"/><circle cx="11.5" cy="12.3" r="1.4" fill="#e03a3a"/></svg>
</body></html>
